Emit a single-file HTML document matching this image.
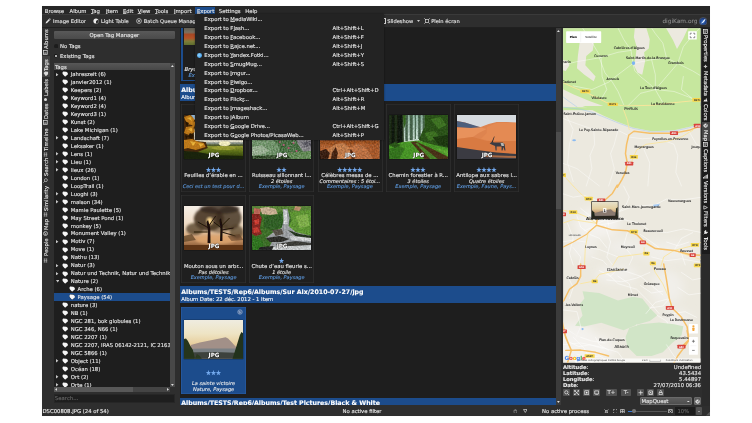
<!DOCTYPE html><html><head><meta charset="utf-8"><title>digiKam</title><style>
*{margin:0;padding:0;box-sizing:border-box}
html,body{width:752px;height:423px;overflow:hidden;background:#fff}
body{font-family:"DejaVu Sans","Liberation Sans",sans-serif;font-size:5.3px;color:#ececec;position:relative;line-height:1;-webkit-text-stroke:0.1px currentColor}
.a{position:absolute;white-space:nowrap}
.t{position:absolute;white-space:nowrap;line-height:8px;height:8px}
.c{text-align:center}
.r{text-align:right}
.b{font-weight:bold}
.i{font-style:italic}
.bl{color:#5e9be0}
.g{color:#8a8a8a}
u{text-decoration-thickness:0.45px;text-underline-offset:0.1px;text-decoration-color:#bbb}
.vl{position:absolute;white-space:nowrap;line-height:8px;height:8px;transform-origin:0 0;transform:rotate(-90deg)}
.vr{position:absolute;white-space:nowrap;line-height:8px;height:8px;transform-origin:0 0;transform:rotate(90deg)}
.cell{position:absolute;width:64.5px;height:87px;background:#212121}
.th{position:absolute;width:59.4px;height:44.5px;overflow:hidden;background:#555;box-shadow:0 0 1px #000}
.jpg{position:absolute;left:0;width:60px;text-align:center;font-weight:bold;color:#fff;font-size:5.6px;line-height:7px;text-shadow:0 0 1px #000,0 0 1px #000}
.st{position:absolute;color:#74aaee;font-size:6.6px;line-height:8px;height:8px;text-align:center;letter-spacing:-0.9px}
.tb{position:absolute;width:9px;height:7px;background:#5a5a5a;border-radius:1px;color:#eee;font-size:5px;line-height:7px;text-align:center;font-weight:bold}
</style></head><body><div id="root" style="position:absolute;left:0;top:0;width:752px;height:423px;overflow:hidden;will-change:transform">
<div class="a" style="left:42px;top:6.4px;width:668.3px;height:409.5px;background:#2e2e2e;box-shadow:0.2px 0.2px 1px rgba(0,0,0,0.7)"></div>
<div class="a" style="left:42px;top:6.4px;width:668.3px;height:7.9px;background:#272727"></div>
<div class="a" style="left:42px;top:14.2px;width:668px;height:0.6px;background:#3a3a3a"></div>
<div class="a" style="left:42px;top:27.2px;width:668px;height:0.8px;background:#202020"></div>
<div class="a" style="left:195.2px;top:6.9px;width:20.2px;height:7.2px;background:#1c4c8c"></div>
<div class="t" style="left:44.8px;top:6.5px"><u>B</u>rowse</div>
<div class="t" style="left:69.5px;top:6.5px"><u>A</u>lbum</div>
<div class="t" style="left:91px;top:6.5px"><u>T</u>ag</div>
<div class="t" style="left:105.9px;top:6.5px"><u>I</u>tem</div>
<div class="t" style="left:123px;top:6.5px"><u>E</u>dit</div>
<div class="t" style="left:137.7px;top:6.5px"><u>V</u>iew</div>
<div class="t" style="left:155.1px;top:6.5px"><u>T</u>ools</div>
<div class="t" style="left:173.9px;top:6.5px"><u>I</u>mport</div>
<div class="t" style="left:197px;top:6.5px"><u>E</u>xport</div>
<div class="t" style="left:218.9px;top:6.5px"><u>S</u>ettings</div>
<div class="t" style="left:245.3px;top:6.5px"><u>H</u>elp</div>
<svg class="a" style="left:44.5px;top:18px" width="6" height="6" viewBox="0 0 6 6"><path d="M0.6 5.4 L1 3.9 L3.9 1 L5 2.1 L2.1 5 Z" fill="#e8e8e8"/><path d="M4.2 0.7 L4.8 0.2 L5.8 1.2 L5.3 1.8 Z" fill="#e8e8e8"/></svg>
<div class="t " style="left:53px;top:16.9px;font-size:5.15px">Image Editor</div>
<svg class="a" style="left:93px;top:18px" width="6" height="6" viewBox="0 0 6 6"><circle cx="3" cy="3" r="2.6" fill="#eee"/><path d="M3 3 L5.2 1.6 A2.6 2.6 0 0 1 3 5.6 Z" fill="#2f2f2f"/></svg>
<div class="t " style="left:101px;top:16.9px;font-size:5.15px">Light Table</div>
<svg class="a" style="left:135.5px;top:18px" width="6" height="6" viewBox="0 0 6 6"><circle cx="3" cy="3" r="2.4" fill="none" stroke="#ddd" stroke-width="0.7"/><circle cx="3" cy="3" r="0.9" fill="#ddd"/></svg>
<div class="t " style="left:143.7px;top:16.9px;font-size:5.15px">Batch Queue Manager</div>
<div class="t " style="left:387.3px;top:16.9px;font-size:5.15px">Slideshow</div>
<div class="a" style="left:384px;top:18px;width:2.2px;height:6px;border:0.7px solid #ddd;border-left:none;border-radius:0 1px 1px 0"></div>
<svg class="a" style="left:417.00px;top:20.20px" width="3" height="2" viewBox="0 0 3 2"><polygon points="0,0 3,0 1.5,2" fill="#ccc"/></svg>
<svg class="a" style="left:423.5px;top:18px" width="6" height="6" viewBox="0 0 6 6"><rect x="1.4" y="1.4" width="3.2" height="3.2" fill="none" stroke="#ddd" stroke-width="0.7"/><path d="M0.3 0.3 L1.6 1.6 M5.7 0.3 L4.4 1.6 M0.3 5.7 L1.6 4.4 M5.7 5.7 L4.4 4.4" stroke="#ddd" stroke-width="0.7"/></svg>
<div class="t " style="left:431.2px;top:16.9px;font-size:5.15px">Plein écran</div>
<div class="t g" style="left:662.4px;top:17px;font-size:5.85px">digiKam.org</div>
<svg class="a" style="left:699px;top:16.6px" width="8.4" height="8.8" viewBox="0 0 8.4 8.8"><defs><radialGradient id="lg" cx="0.45" cy="0.55" r="0.6"><stop offset="0" stop-color="#3a78d0"/><stop offset="0.7" stop-color="#1c3c80"/><stop offset="1" stop-color="#222a40"/></radialGradient></defs><circle cx="4.2" cy="4.4" r="4" fill="url(#lg)" stroke="#6a6a6a" stroke-width="0.5"/><path d="M1.6 6.6 Q3.4 5.6 4.4 3.6 Q5.2 2.2 6.6 1.8 Q6 3.6 5 5 Q3.8 6.4 1.6 6.6Z" fill="#eef4ff"/></svg>
<div class="a" style="left:42px;top:28px;width:8px;height:378px;background:#2e2e2e"></div>
<div class="a" style="left:42.3px;top:56.1px;width:7.4px;height:21.2px;background:#424242"></div>
<div class="vl" style="left:42.3px;top:48.6px">Albums</div>
<svg class="a" style="left:43.4px;top:49.8px" width="4.6" height="4.8" viewBox="0 0 5 5"><rect x="0.4" y="0.4" width="4.2" height="4.2" fill="none" stroke="#dcdcdc" stroke-width="0.8"/><path d="M1.2 3.8 L2.2 2.2 L3 3.2 L3.8 2.6 L3.8 3.8Z" fill="#dcdcdc"/></svg>
<div class="vl" style="left:42.3px;top:70.5px">Tags</div>
<svg class="a" style="left:43.1px;top:70.7px" width="5.6" height="5.6" viewBox="0 0 6 6"><path d="M0.6 2.2 L2.2 0.6 L5.4 0.8 L5.4 3.4 L3 5.6 Z" fill="#dcdcdc"/></svg>
<div class="vl" style="left:42.3px;top:95.5px">Labels</div>
<div class="a" style="left:44.3px;top:97.9px;width:3.2px;height:3.2px;border-radius:50%;background:#dcdcdc"></div>
<div class="vl" style="left:42.3px;top:119.4px">Dates</div>
<svg class="a" style="left:43.4px;top:120.2px" width="4.6" height="4.8" viewBox="0 0 5 5"><rect x="0.4" y="0.4" width="4.2" height="4.2" fill="none" stroke="#dcdcdc" stroke-width="0.8"/><path d="M1.2 3.8 L2.2 2.2 L3 3.2 L3.8 2.6 L3.8 3.8Z" fill="#dcdcdc"/></svg>
<div class="vl" style="left:42.3px;top:150.6px">Timeline</div>
<svg class="a" style="left:43.4px;top:152.0px" width="5" height="5" viewBox="0 0 5 5"><path d="M0.6 1 H4.4 M0.6 2.5 H4.4 M0.6 4 H4.4 M1.5 0.5 V4.5 M3.5 0.5 V4.5" stroke="#dcdcdc" stroke-width="0.5" fill="none" opacity="0.8"/></svg>
<div class="vl" style="left:42.3px;top:176.2px">Search</div>
<svg class="a" style="left:43.4px;top:178.1px" width="5" height="5" viewBox="0 0 5 5"><circle cx="2.9" cy="2.1" r="1.5" fill="none" stroke="#dcdcdc" stroke-width="0.6"/><path d="M1.8 3.2 L0.4 4.6" stroke="#dcdcdc" stroke-width="0.7"/></svg>
<div class="vl" style="left:42.3px;top:210.5px">Similarity</div>
<svg class="a" style="left:43.4px;top:211.5px" width="5" height="5" viewBox="0 0 5 5"><path d="M0.6 1 H4.4 M0.6 2.5 H4.4 M0.6 4 H4.4 M1.5 0.5 V4.5 M3.5 0.5 V4.5" stroke="#dcdcdc" stroke-width="0.5" fill="none" opacity="0.8"/></svg>
<div class="vl" style="left:42.3px;top:229.5px">Map</div>
<svg class="a" style="left:43.4px;top:231.3px" width="5" height="5" viewBox="0 0 5 5"><circle cx="2.5" cy="2.5" r="2" fill="none" stroke="#dcdcdc" stroke-width="0.7"/><path d="M1 1.6 L2.6 2.2 L2 3.6 L3.4 3 " stroke="#dcdcdc" stroke-width="0.6" fill="none"/></svg>
<div class="vl" style="left:42.3px;top:256.2px">People</div>
<svg class="a" style="left:43.4px;top:258.1px" width="5" height="5" viewBox="0 0 5 5"><path d="M0.6 1 H4.4 M0.6 2.5 H4.4 M0.6 4 H4.4 M1.5 0.5 V4.5 M3.5 0.5 V4.5" stroke="#dcdcdc" stroke-width="0.5" fill="none" opacity="0.8"/></svg>
<div class="a" style="left:54px;top:31.2px;width:120.8px;height:8.2px;background:linear-gradient(#595959,#4a4a4a);border-radius:1px;box-shadow:0 0 0.6px #111"></div>
<div class="t c" style="left:54px;top:31.2px;width:120.5px">Open Tag Manager</div>
<svg class="a" style="left:53.70px;top:43.50px" width="4.4" height="4.4" viewBox="0 0 4.4 4.4"><circle cx="2.2" cy="2.2" r="2.2" fill="#1c1c1c"/></svg>
<div class="t" style="left:60px;top:42.2px">No Tags</div>
<svg class="a" style="left:54.20px;top:54.30px" width="3.4" height="3.4" viewBox="0 0 3.4 3.4"><circle cx="1.7" cy="1.7" r="1.7" fill="#161616"/></svg>
<svg class="a" style="left:54.90px;top:55.00px" width="2" height="2" viewBox="0 0 2 2"><circle cx="1" cy="1" r="1" fill="#e0e0e0"/></svg>
<div class="t" style="left:60px;top:52.4px">Existing Tags</div>
<div class="a" style="left:54px;top:63px;width:116.1px;height:324px;background:#1e1e1e"></div>
<div class="a" style="left:54px;top:63px;width:116.1px;height:6.7px;background:linear-gradient(#575757,#474747)"></div>
<div class="t" style="left:55px;top:62.5px">Tags</div>
<div class="a" style="left:170.1px;top:63px;width:4.5px;height:323.8px;background:#484848"></div>
<svg class="a" style="left:171.00px;top:64.60px" width="2.8" height="2" viewBox="0 0 2.8 2"><polygon points="0,2 2.8,2 1.4,0" fill="#ddd"/></svg>
<svg class="a" style="left:171.00px;top:383.60px" width="2.8" height="2" viewBox="0 0 2.8 2"><polygon points="0,0 2.8,0 1.4,2" fill="#ddd"/></svg>
<div class="a" style="left:54px;top:69.8px;width:116.1px;height:317.1px;overflow:hidden">
<svg class="a" style="left:2.40px;top:2.90px" width="2.4" height="3.4" viewBox="0 0 2.4 3.4"><polygon points="0,0 0,3.4 2.4,1.7" fill="#c8c8c8"/></svg>
<svg class="a" style="left:8.0px;top:1.6000000000000085px" width="6.4" height="6" viewBox="0 0 6.4 6"><path d="M0.5 1.2 L1.2 0.5 L4.4 0.7 L5.9 1.9 L5.7 3.2 L3.6 5.6 L2.6 5.3 L0.6 3 Z" fill="#f6f6f6" stroke="#0c0c0c" stroke-width="0.5" paint-order="stroke"/></svg>
<div class="t" style="left:16.8px;top:0.40000000000000835px">Jahreszeit (6)</div>
<svg class="a" style="left:8.0px;top:9.565000000000008px" width="6.4" height="6" viewBox="0 0 6.4 6"><path d="M0.5 1.2 L1.2 0.5 L4.4 0.7 L5.9 1.9 L5.7 3.2 L3.6 5.6 L2.6 5.3 L0.6 3 Z" fill="#f6f6f6" stroke="#0c0c0c" stroke-width="0.5" paint-order="stroke"/></svg>
<div class="t" style="left:16.8px;top:8.365000000000009px">janvier2012 (1)</div>
<svg class="a" style="left:8.0px;top:17.53000000000001px" width="6.4" height="6" viewBox="0 0 6.4 6"><path d="M0.5 1.2 L1.2 0.5 L4.4 0.7 L5.9 1.9 L5.7 3.2 L3.6 5.6 L2.6 5.3 L0.6 3 Z" fill="#f6f6f6" stroke="#0c0c0c" stroke-width="0.5" paint-order="stroke"/></svg>
<div class="t" style="left:16.8px;top:16.33000000000001px">Keepers (2)</div>
<svg class="a" style="left:8.0px;top:25.495000000000008px" width="6.4" height="6" viewBox="0 0 6.4 6"><path d="M0.5 1.2 L1.2 0.5 L4.4 0.7 L5.9 1.9 L5.7 3.2 L3.6 5.6 L2.6 5.3 L0.6 3 Z" fill="#f6f6f6" stroke="#0c0c0c" stroke-width="0.5" paint-order="stroke"/></svg>
<div class="t" style="left:16.8px;top:24.29500000000001px">Keyword1 (4)</div>
<svg class="a" style="left:8.0px;top:33.46000000000001px" width="6.4" height="6" viewBox="0 0 6.4 6"><path d="M0.5 1.2 L1.2 0.5 L4.4 0.7 L5.9 1.9 L5.7 3.2 L3.6 5.6 L2.6 5.3 L0.6 3 Z" fill="#f6f6f6" stroke="#0c0c0c" stroke-width="0.5" paint-order="stroke"/></svg>
<div class="t" style="left:16.8px;top:32.260000000000005px">Keyword2 (4)</div>
<svg class="a" style="left:8.0px;top:41.42500000000001px" width="6.4" height="6" viewBox="0 0 6.4 6"><path d="M0.5 1.2 L1.2 0.5 L4.4 0.7 L5.9 1.9 L5.7 3.2 L3.6 5.6 L2.6 5.3 L0.6 3 Z" fill="#f6f6f6" stroke="#0c0c0c" stroke-width="0.5" paint-order="stroke"/></svg>
<div class="t" style="left:16.8px;top:40.22500000000001px">Keyword3 (1)</div>
<svg class="a" style="left:8.0px;top:49.39000000000001px" width="6.4" height="6" viewBox="0 0 6.4 6"><path d="M0.5 1.2 L1.2 0.5 L4.4 0.7 L5.9 1.9 L5.7 3.2 L3.6 5.6 L2.6 5.3 L0.6 3 Z" fill="#f6f6f6" stroke="#0c0c0c" stroke-width="0.5" paint-order="stroke"/></svg>
<div class="t" style="left:16.8px;top:48.190000000000005px">Kunst (2)</div>
<svg class="a" style="left:8.0px;top:57.355000000000004px" width="6.4" height="6" viewBox="0 0 6.4 6"><path d="M0.5 1.2 L1.2 0.5 L4.4 0.7 L5.9 1.9 L5.7 3.2 L3.6 5.6 L2.6 5.3 L0.6 3 Z" fill="#f6f6f6" stroke="#0c0c0c" stroke-width="0.5" paint-order="stroke"/></svg>
<div class="t" style="left:16.8px;top:56.155px">Lake Michigan (1)</div>
<svg class="a" style="left:2.40px;top:66.62px" width="2.4" height="3.4" viewBox="0 0 2.4 3.4"><polygon points="0,0 0,3.4 2.4,1.7" fill="#c8c8c8"/></svg>
<svg class="a" style="left:8.0px;top:65.32000000000001px" width="6.4" height="6" viewBox="0 0 6.4 6"><path d="M0.5 1.2 L1.2 0.5 L4.4 0.7 L5.9 1.9 L5.7 3.2 L3.6 5.6 L2.6 5.3 L0.6 3 Z" fill="#f6f6f6" stroke="#0c0c0c" stroke-width="0.5" paint-order="stroke"/></svg>
<div class="t" style="left:16.8px;top:64.12px">Landschaft (7)</div>
<svg class="a" style="left:8.0px;top:73.28500000000001px" width="6.4" height="6" viewBox="0 0 6.4 6"><path d="M0.5 1.2 L1.2 0.5 L4.4 0.7 L5.9 1.9 L5.7 3.2 L3.6 5.6 L2.6 5.3 L0.6 3 Z" fill="#f6f6f6" stroke="#0c0c0c" stroke-width="0.5" paint-order="stroke"/></svg>
<div class="t" style="left:16.8px;top:72.08500000000001px">Leksaker (1)</div>
<svg class="a" style="left:2.40px;top:82.55px" width="2.4" height="3.4" viewBox="0 0 2.4 3.4"><polygon points="0,0 0,3.4 2.4,1.7" fill="#c8c8c8"/></svg>
<svg class="a" style="left:8.0px;top:81.25000000000001px" width="6.4" height="6" viewBox="0 0 6.4 6"><path d="M0.5 1.2 L1.2 0.5 L4.4 0.7 L5.9 1.9 L5.7 3.2 L3.6 5.6 L2.6 5.3 L0.6 3 Z" fill="#f6f6f6" stroke="#0c0c0c" stroke-width="0.5" paint-order="stroke"/></svg>
<div class="t" style="left:16.8px;top:80.05000000000001px">Lens (1)</div>
<svg class="a" style="left:2.40px;top:90.52px" width="2.4" height="3.4" viewBox="0 0 2.4 3.4"><polygon points="0,0 0,3.4 2.4,1.7" fill="#c8c8c8"/></svg>
<svg class="a" style="left:8.0px;top:89.215px" width="6.4" height="6" viewBox="0 0 6.4 6"><path d="M0.5 1.2 L1.2 0.5 L4.4 0.7 L5.9 1.9 L5.7 3.2 L3.6 5.6 L2.6 5.3 L0.6 3 Z" fill="#f6f6f6" stroke="#0c0c0c" stroke-width="0.5" paint-order="stroke"/></svg>
<div class="t" style="left:16.8px;top:88.015px">Lieu (1)</div>
<svg class="a" style="left:2.40px;top:98.48px" width="2.4" height="3.4" viewBox="0 0 2.4 3.4"><polygon points="0,0 0,3.4 2.4,1.7" fill="#c8c8c8"/></svg>
<svg class="a" style="left:8.0px;top:97.18px" width="6.4" height="6" viewBox="0 0 6.4 6"><path d="M0.5 1.2 L1.2 0.5 L4.4 0.7 L5.9 1.9 L5.7 3.2 L3.6 5.6 L2.6 5.3 L0.6 3 Z" fill="#f6f6f6" stroke="#0c0c0c" stroke-width="0.5" paint-order="stroke"/></svg>
<div class="t" style="left:16.8px;top:95.98px">lieux (26)</div>
<svg class="a" style="left:8.0px;top:105.14500000000001px" width="6.4" height="6" viewBox="0 0 6.4 6"><path d="M0.5 1.2 L1.2 0.5 L4.4 0.7 L5.9 1.9 L5.7 3.2 L3.6 5.6 L2.6 5.3 L0.6 3 Z" fill="#f6f6f6" stroke="#0c0c0c" stroke-width="0.5" paint-order="stroke"/></svg>
<div class="t" style="left:16.8px;top:103.94500000000001px">London (1)</div>
<svg class="a" style="left:8.0px;top:113.11px" width="6.4" height="6" viewBox="0 0 6.4 6"><path d="M0.5 1.2 L1.2 0.5 L4.4 0.7 L5.9 1.9 L5.7 3.2 L3.6 5.6 L2.6 5.3 L0.6 3 Z" fill="#f6f6f6" stroke="#0c0c0c" stroke-width="0.5" paint-order="stroke"/></svg>
<div class="t" style="left:16.8px;top:111.91px">LoopTrail (1)</div>
<svg class="a" style="left:2.40px;top:122.38px" width="2.4" height="3.4" viewBox="0 0 2.4 3.4"><polygon points="0,0 0,3.4 2.4,1.7" fill="#c8c8c8"/></svg>
<svg class="a" style="left:8.0px;top:121.075px" width="6.4" height="6" viewBox="0 0 6.4 6"><path d="M0.5 1.2 L1.2 0.5 L4.4 0.7 L5.9 1.9 L5.7 3.2 L3.6 5.6 L2.6 5.3 L0.6 3 Z" fill="#f6f6f6" stroke="#0c0c0c" stroke-width="0.5" paint-order="stroke"/></svg>
<div class="t" style="left:16.8px;top:119.875px">Luoghi (3)</div>
<svg class="a" style="left:2.40px;top:130.34px" width="2.4" height="3.4" viewBox="0 0 2.4 3.4"><polygon points="0,0 0,3.4 2.4,1.7" fill="#c8c8c8"/></svg>
<svg class="a" style="left:8.0px;top:129.04000000000002px" width="6.4" height="6" viewBox="0 0 6.4 6"><path d="M0.5 1.2 L1.2 0.5 L4.4 0.7 L5.9 1.9 L5.7 3.2 L3.6 5.6 L2.6 5.3 L0.6 3 Z" fill="#f6f6f6" stroke="#0c0c0c" stroke-width="0.5" paint-order="stroke"/></svg>
<div class="t" style="left:16.8px;top:127.84000000000002px">maison (34)</div>
<svg class="a" style="left:8.0px;top:137.005px" width="6.4" height="6" viewBox="0 0 6.4 6"><path d="M0.5 1.2 L1.2 0.5 L4.4 0.7 L5.9 1.9 L5.7 3.2 L3.6 5.6 L2.6 5.3 L0.6 3 Z" fill="#f6f6f6" stroke="#0c0c0c" stroke-width="0.5" paint-order="stroke"/></svg>
<div class="t" style="left:16.8px;top:135.805px">Mamie Paulette (5)</div>
<svg class="a" style="left:8.0px;top:144.97000000000003px" width="6.4" height="6" viewBox="0 0 6.4 6"><path d="M0.5 1.2 L1.2 0.5 L4.4 0.7 L5.9 1.9 L5.7 3.2 L3.6 5.6 L2.6 5.3 L0.6 3 Z" fill="#f6f6f6" stroke="#0c0c0c" stroke-width="0.5" paint-order="stroke"/></svg>
<div class="t" style="left:16.8px;top:143.77000000000004px">May Street Pond (1)</div>
<svg class="a" style="left:8.0px;top:152.935px" width="6.4" height="6" viewBox="0 0 6.4 6"><path d="M0.5 1.2 L1.2 0.5 L4.4 0.7 L5.9 1.9 L5.7 3.2 L3.6 5.6 L2.6 5.3 L0.6 3 Z" fill="#f6f6f6" stroke="#0c0c0c" stroke-width="0.5" paint-order="stroke"/></svg>
<div class="t" style="left:16.8px;top:151.735px">monkey (5)</div>
<svg class="a" style="left:8.0px;top:160.90000000000003px" width="6.4" height="6" viewBox="0 0 6.4 6"><path d="M0.5 1.2 L1.2 0.5 L4.4 0.7 L5.9 1.9 L5.7 3.2 L3.6 5.6 L2.6 5.3 L0.6 3 Z" fill="#f6f6f6" stroke="#0c0c0c" stroke-width="0.5" paint-order="stroke"/></svg>
<div class="t" style="left:16.8px;top:159.70000000000005px">Monument Valley (1)</div>
<svg class="a" style="left:2.40px;top:170.17px" width="2.4" height="3.4" viewBox="0 0 2.4 3.4"><polygon points="0,0 0,3.4 2.4,1.7" fill="#c8c8c8"/></svg>
<svg class="a" style="left:8.0px;top:168.865px" width="6.4" height="6" viewBox="0 0 6.4 6"><path d="M0.5 1.2 L1.2 0.5 L4.4 0.7 L5.9 1.9 L5.7 3.2 L3.6 5.6 L2.6 5.3 L0.6 3 Z" fill="#f6f6f6" stroke="#0c0c0c" stroke-width="0.5" paint-order="stroke"/></svg>
<div class="t" style="left:16.8px;top:167.66500000000002px">Motiv (7)</div>
<svg class="a" style="left:8.0px;top:176.82999999999998px" width="6.4" height="6" viewBox="0 0 6.4 6"><path d="M0.5 1.2 L1.2 0.5 L4.4 0.7 L5.9 1.9 L5.7 3.2 L3.6 5.6 L2.6 5.3 L0.6 3 Z" fill="#f6f6f6" stroke="#0c0c0c" stroke-width="0.5" paint-order="stroke"/></svg>
<div class="t" style="left:16.8px;top:175.63px">Move (1)</div>
<svg class="a" style="left:8.0px;top:184.79500000000002px" width="6.4" height="6" viewBox="0 0 6.4 6"><path d="M0.5 1.2 L1.2 0.5 L4.4 0.7 L5.9 1.9 L5.7 3.2 L3.6 5.6 L2.6 5.3 L0.6 3 Z" fill="#f6f6f6" stroke="#0c0c0c" stroke-width="0.5" paint-order="stroke"/></svg>
<div class="t" style="left:16.8px;top:183.59500000000003px">Nathu (13)</div>
<svg class="a" style="left:2.40px;top:194.06px" width="2.4" height="3.4" viewBox="0 0 2.4 3.4"><polygon points="0,0 0,3.4 2.4,1.7" fill="#c8c8c8"/></svg>
<svg class="a" style="left:8.0px;top:192.76px" width="6.4" height="6" viewBox="0 0 6.4 6"><path d="M0.5 1.2 L1.2 0.5 L4.4 0.7 L5.9 1.9 L5.7 3.2 L3.6 5.6 L2.6 5.3 L0.6 3 Z" fill="#f6f6f6" stroke="#0c0c0c" stroke-width="0.5" paint-order="stroke"/></svg>
<div class="t" style="left:16.8px;top:191.56px">Natur (3)</div>
<svg class="a" style="left:2.40px;top:202.03px" width="2.4" height="3.4" viewBox="0 0 2.4 3.4"><polygon points="0,0 0,3.4 2.4,1.7" fill="#c8c8c8"/></svg>
<svg class="a" style="left:8.0px;top:200.72500000000002px" width="6.4" height="6" viewBox="0 0 6.4 6"><path d="M0.5 1.2 L1.2 0.5 L4.4 0.7 L5.9 1.9 L5.7 3.2 L3.6 5.6 L2.6 5.3 L0.6 3 Z" fill="#f6f6f6" stroke="#0c0c0c" stroke-width="0.5" paint-order="stroke"/></svg>
<div class="t" style="left:16.8px;top:199.52500000000003px">Natur und Technik, Natur und Technik</div>
<svg class="a" style="left:1.90px;top:210.49px" width="3.4" height="2.4" viewBox="0 0 3.4 2.4"><polygon points="0,0 3.4,0 1.7,2.4" fill="#c8c8c8"/></svg>
<svg class="a" style="left:8.0px;top:208.69px" width="6.4" height="6" viewBox="0 0 6.4 6"><path d="M0.5 1.2 L1.2 0.5 L4.4 0.7 L5.9 1.9 L5.7 3.2 L3.6 5.6 L2.6 5.3 L0.6 3 Z" fill="#f6f6f6" stroke="#0c0c0c" stroke-width="0.5" paint-order="stroke"/></svg>
<div class="t" style="left:16.8px;top:207.49px">Nature (2)</div>
<svg class="a" style="left:14.8px;top:216.65500000000003px" width="6.4" height="6" viewBox="0 0 6.4 6"><path d="M0.5 1.2 L1.2 0.5 L4.4 0.7 L5.9 1.9 L5.7 3.2 L3.6 5.6 L2.6 5.3 L0.6 3 Z" fill="#f6f6f6" stroke="#0c0c0c" stroke-width="0.5" paint-order="stroke"/></svg>
<div class="t" style="left:23.6px;top:215.45500000000004px">Arche (6)</div>
<div class="a" style="left:0;top:223.62px;width:116.5px;height:8px;background:#1c4c8c"></div>
<svg class="a" style="left:14.8px;top:224.62px" width="6.4" height="6" viewBox="0 0 6.4 6"><path d="M0.5 1.2 L1.2 0.5 L4.4 0.7 L5.9 1.9 L5.7 3.2 L3.6 5.6 L2.6 5.3 L0.6 3 Z" fill="#f6f6f6" stroke="#0c0c0c" stroke-width="0.5" paint-order="stroke"/></svg>
<div class="t" style="left:23.6px;top:223.42000000000002px">Paysage (54)</div>
<svg class="a" style="left:8.0px;top:232.58499999999998px" width="6.4" height="6" viewBox="0 0 6.4 6"><path d="M0.5 1.2 L1.2 0.5 L4.4 0.7 L5.9 1.9 L5.7 3.2 L3.6 5.6 L2.6 5.3 L0.6 3 Z" fill="#f6f6f6" stroke="#0c0c0c" stroke-width="0.5" paint-order="stroke"/></svg>
<div class="t" style="left:16.8px;top:231.385px">nature (3)</div>
<svg class="a" style="left:8.0px;top:240.55px" width="6.4" height="6" viewBox="0 0 6.4 6"><path d="M0.5 1.2 L1.2 0.5 L4.4 0.7 L5.9 1.9 L5.7 3.2 L3.6 5.6 L2.6 5.3 L0.6 3 Z" fill="#f6f6f6" stroke="#0c0c0c" stroke-width="0.5" paint-order="stroke"/></svg>
<div class="t" style="left:16.8px;top:239.35000000000002px">NB (1)</div>
<svg class="a" style="left:8.0px;top:248.515px" width="6.4" height="6" viewBox="0 0 6.4 6"><path d="M0.5 1.2 L1.2 0.5 L4.4 0.7 L5.9 1.9 L5.7 3.2 L3.6 5.6 L2.6 5.3 L0.6 3 Z" fill="#f6f6f6" stroke="#0c0c0c" stroke-width="0.5" paint-order="stroke"/></svg>
<div class="t" style="left:16.8px;top:247.315px">NGC 281, bok globules (1)</div>
<svg class="a" style="left:8.0px;top:256.48px" width="6.4" height="6" viewBox="0 0 6.4 6"><path d="M0.5 1.2 L1.2 0.5 L4.4 0.7 L5.9 1.9 L5.7 3.2 L3.6 5.6 L2.6 5.3 L0.6 3 Z" fill="#f6f6f6" stroke="#0c0c0c" stroke-width="0.5" paint-order="stroke"/></svg>
<div class="t" style="left:16.8px;top:255.28000000000003px">NGC 346, N66 (1)</div>
<svg class="a" style="left:8.0px;top:264.445px" width="6.4" height="6" viewBox="0 0 6.4 6"><path d="M0.5 1.2 L1.2 0.5 L4.4 0.7 L5.9 1.9 L5.7 3.2 L3.6 5.6 L2.6 5.3 L0.6 3 Z" fill="#f6f6f6" stroke="#0c0c0c" stroke-width="0.5" paint-order="stroke"/></svg>
<div class="t" style="left:16.8px;top:263.245px">NGC 2207 (1)</div>
<svg class="a" style="left:8.0px;top:272.41px" width="6.4" height="6" viewBox="0 0 6.4 6"><path d="M0.5 1.2 L1.2 0.5 L4.4 0.7 L5.9 1.9 L5.7 3.2 L3.6 5.6 L2.6 5.3 L0.6 3 Z" fill="#f6f6f6" stroke="#0c0c0c" stroke-width="0.5" paint-order="stroke"/></svg>
<div class="t" style="left:16.8px;top:271.21000000000004px">NGC 2207, IRAS 06142-2121, IC 2163</div>
<svg class="a" style="left:8.0px;top:280.375px" width="6.4" height="6" viewBox="0 0 6.4 6"><path d="M0.5 1.2 L1.2 0.5 L4.4 0.7 L5.9 1.9 L5.7 3.2 L3.6 5.6 L2.6 5.3 L0.6 3 Z" fill="#f6f6f6" stroke="#0c0c0c" stroke-width="0.5" paint-order="stroke"/></svg>
<div class="t" style="left:16.8px;top:279.175px">NGC 5866 (1)</div>
<svg class="a" style="left:2.40px;top:289.64px" width="2.4" height="3.4" viewBox="0 0 2.4 3.4"><polygon points="0,0 0,3.4 2.4,1.7" fill="#c8c8c8"/></svg>
<svg class="a" style="left:8.0px;top:288.34000000000003px" width="6.4" height="6" viewBox="0 0 6.4 6"><path d="M0.5 1.2 L1.2 0.5 L4.4 0.7 L5.9 1.9 L5.7 3.2 L3.6 5.6 L2.6 5.3 L0.6 3 Z" fill="#f6f6f6" stroke="#0c0c0c" stroke-width="0.5" paint-order="stroke"/></svg>
<div class="t" style="left:16.8px;top:287.14000000000004px">Object (11)</div>
<svg class="a" style="left:8.0px;top:296.305px" width="6.4" height="6" viewBox="0 0 6.4 6"><path d="M0.5 1.2 L1.2 0.5 L4.4 0.7 L5.9 1.9 L5.7 3.2 L3.6 5.6 L2.6 5.3 L0.6 3 Z" fill="#f6f6f6" stroke="#0c0c0c" stroke-width="0.5" paint-order="stroke"/></svg>
<div class="t" style="left:16.8px;top:295.105px">Océan (18)</div>
<svg class="a" style="left:2.40px;top:305.57px" width="2.4" height="3.4" viewBox="0 0 2.4 3.4"><polygon points="0,0 0,3.4 2.4,1.7" fill="#c8c8c8"/></svg>
<svg class="a" style="left:8.0px;top:304.27000000000004px" width="6.4" height="6" viewBox="0 0 6.4 6"><path d="M0.5 1.2 L1.2 0.5 L4.4 0.7 L5.9 1.9 L5.7 3.2 L3.6 5.6 L2.6 5.3 L0.6 3 Z" fill="#f6f6f6" stroke="#0c0c0c" stroke-width="0.5" paint-order="stroke"/></svg>
<div class="t" style="left:16.8px;top:303.07000000000005px">Ort (2)</div>
<svg class="a" style="left:2.40px;top:313.54px" width="2.4" height="3.4" viewBox="0 0 2.4 3.4"><polygon points="0,0 0,3.4 2.4,1.7" fill="#c8c8c8"/></svg>
<svg class="a" style="left:8.0px;top:312.235px" width="6.4" height="6" viewBox="0 0 6.4 6"><path d="M0.5 1.2 L1.2 0.5 L4.4 0.7 L5.9 1.9 L5.7 3.2 L3.6 5.6 L2.6 5.3 L0.6 3 Z" fill="#f6f6f6" stroke="#0c0c0c" stroke-width="0.5" paint-order="stroke"/></svg>
<div class="t" style="left:16.8px;top:311.035px">Orte (1)</div>
</div>
<div class="a" style="left:54px;top:386.9px;width:116.1px;height:4.8px;background:#444"></div>
<div class="a" style="left:54px;top:386.9px;width:79.3px;height:4.8px;background:#585858"></div>
<svg class="a" style="left:54.80px;top:387.90px" width="2" height="2.8" viewBox="0 0 2 2.8"><polygon points="2,0 2,2.8 0,1.4" fill="#ddd"/></svg>
<svg class="a" style="left:166.60px;top:387.90px" width="2" height="2.8" viewBox="0 0 2 2.8"><polygon points="0,0 0,2.8 2,1.4" fill="#ddd"/></svg>
<div class="a" style="left:54px;top:393.9px;width:121px;height:8.7px;background:#1e1e1e;border:0.5px solid #262626"></div>
<div class="t" style="left:55px;top:394.2px;color:#686868">Search...</div>
<div class="a" style="left:179.5px;top:28px;width:376.8px;height:377.2px;background:#1e1e1e"></div>
<div class="a" style="left:556.3px;top:28px;width:4.3px;height:377.2px;background:#3b3b3b"></div>
<div class="a" style="left:556.3px;top:132px;width:4.3px;height:77px;background:#4d4d4d"></div>
<svg class="a" style="left:557.10px;top:29.50px" width="2.8" height="2" viewBox="0 0 2.8 2"><polygon points="0,2 2.8,2 1.4,0" fill="#ddd"/></svg>
<svg class="a" style="left:557.10px;top:401.00px" width="2.8" height="2" viewBox="0 0 2.8 2"><polygon points="0,0 2.8,0 1.4,2" fill="#ddd"/></svg>
<div class="a" style="left:181px;top:28px;width:2px;height:53px;background:#1c4c8c"></div>
<div class="a" style="left:181px;top:79.6px;width:65px;height:1.4px;background:#1c4c8c"></div>
<div class="a" style="left:184px;top:28px;width:40px;height:17.3px;background:linear-gradient(180deg,#625e54 0,#7a7060 25%,#a84824 38%,#b45228 60%,#7e7e3a 78%,#5e6e2e 100%)"></div>
<div class="t i" style="left:184.5px;top:64.8px;font-size:5.3px">Bryce Canyon</div>
<div class="t i bl" style="left:188.5px;top:70.5px;font-size:5.3px">Exemple, Paysage</div>
<div class="a" style="left:179.5px;top:84.2px;width:376.5px;height:16.8px;background:#1c4c8c;overflow:hidden"><div class="t b" style="left:1.7px;top:1.6px;font-size:6.28px;color:#fff">Albums/TESTS/Rep6/Albums/Exemples</div><div class="t" style="left:1.7px;top:9.3px;font-size:5.3px;color:#fff">Album Date: 22 déc. 2012 - 8 Items</div></div>
<div class="a" style="left:179.5px;top:286px;width:376.5px;height:17.3px;background:#1c4c8c;overflow:hidden"><div class="t b" style="left:1.7px;top:1.6px;font-size:6.28px;color:#fff">Albums/TESTS/Rep6/Albums/Sur Aix/2010-07-27/jpg</div><div class="t" style="left:1.7px;top:9.3px;font-size:5.3px;color:#fff">Album Date: 22 déc. 2012 - 1 Item</div></div>
<div class="a" style="left:179.5px;top:397.9px;width:376.5px;height:7.4px;background:#1c4c8c;overflow:hidden"><div class="t b" style="left:1.7px;top:1.6px;font-size:6.28px;color:#fff">Albums/TESTS/Rep6/Albums/Test Pictures/Black &amp; White</div></div>
<div class="cell" style="left:181.3px;top:104px;height:88px;width:65px;background:#1f1f1f;box-shadow:inset 0 0 0 0.6px #343434">
<div class="th" style="left:2.7px;top:10.50px;height:44.5px"><svg width="59.4" height="44.5" viewBox="0 0 60 44.5" preserveAspectRatio="none" style="position:absolute;left:0;top:0"><defs><filter id="bl" x="-5%" y="-5%" width="110%" height="110%"><feGaussianBlur stdDeviation="0.7"/></filter><filter id="b2" x="-5%" y="-5%" width="110%" height="110%"><feGaussianBlur stdDeviation="1.3"/></filter><filter id="nz" x="0" y="0" width="100%" height="100%"><feTurbulence type="fractalNoise" baseFrequency="0.55" numOctaves="2" seed="7"/><feColorMatrix type="matrix" values="0 0 0 0 0  0 0 0 0 0  0 0 0 0 0  1.6 1.6 0 0 -1.1"/></filter><filter id="nw" x="0" y="0" width="100%" height="100%"><feTurbulence type="fractalNoise" baseFrequency="0.6" numOctaves="2" seed="3"/><feColorMatrix type="matrix" values="0 0 0 0 1  0 0 0 0 1  0 0 0 0 1  1.6 0 1.6 0 -1.25"/></filter></defs><defs><linearGradient id="i1f" x1="0" y1="0" x2="0" y2="1"><stop offset="0" stop-color="#98a034"/><stop offset="0.45" stop-color="#5c7018"/><stop offset="1" stop-color="#222e08"/></linearGradient></defs><rect width="60" height="44.5" fill="#3a2408"/><g filter="url(#bl)"><rect x="10" y="0" width="50" height="29" fill="#f6f2dc"/><rect x="10" y="27.3" width="50" height="3" fill="#8a9488"/><rect x="10" y="29.4" width="50" height="2.6" fill="#56622e"/><rect x="0" y="31" width="60" height="13.5" fill="url(#i1f)"/><ellipse cx="41" cy="28.6" rx="6" ry="2.6" fill="#fbf6c8"/><ellipse cx="40" cy="33" rx="12" ry="2" fill="#b0b040" opacity="0.6"/><path d="M0 0 H13 L12 10 L9 20 L11 26 L22 27 L24 33 L14 37 L0 38Z" fill="#4a2c0a"/><path d="M0 2 L6 0 L11 4 L8 10 L3 9Z M2 12 L9 11 L11 17 L5 20 L0 18Z M0 25 L8 24 L14 26.5 L20 28 L22 32 L12 35 L4 33 L0 34Z M5 5 L12 7 L10 13Z" fill="#c8801a"/><path d="M3 3 L7 2 L8 6Z M4 14 L8 13 L8 17Z M6 26 L12 27.5 L9 31Z M14 28 L20 29 L17 32Z" fill="#f0b83c"/><path d="M7 0 H12 L11 5Z" fill="#9cc0e0"/><path d="M1 6 L5 8 L3 12Z M6 18 L10 20 L8 24 L4 22Z M1 20 L4 21 L2 25Z" fill="#2a1806"/><path d="M0 36 L14 37 L30 40 L60 41 V44.5 H0Z" fill="#1e2808"/></g><rect width="60" height="44.5" filter="url(#nz)" opacity="0.12"/></svg><div class="jpg" style="top:37.6px">JPG</div></div>
<div class="st" style="left:-0.4px;top:61.8px;width:64px">★★★</div>
<div class="t c " style="left:0.5px;top:66.9px;width:63.5px;font-size:5.3px">Feuilles d’érable en ...</div>
<div class="t c " style="left:0.5px;top:72.55000000000001px;width:63.5px;font-size:5.3px">&nbsp;</div>
<div class="t c i bl" style="left:0.5px;top:78.20000000000002px;width:63.5px;font-size:5.0px">Ceci est un test pour d...</div>
</div>
<div class="cell" style="left:249.4px;top:104px;height:88px;width:65px;background:#1f1f1f;box-shadow:inset 0 0 0 0.6px #343434">
<div class="th" style="left:2.7px;top:10.50px;height:44.5px"><svg width="59.4" height="44.5" viewBox="0 0 60 44.5" preserveAspectRatio="none" style="position:absolute;left:0;top:0"><defs><filter id="bl" x="-5%" y="-5%" width="110%" height="110%"><feGaussianBlur stdDeviation="0.7"/></filter><filter id="b2" x="-5%" y="-5%" width="110%" height="110%"><feGaussianBlur stdDeviation="1.3"/></filter><filter id="nz" x="0" y="0" width="100%" height="100%"><feTurbulence type="fractalNoise" baseFrequency="0.55" numOctaves="2" seed="7"/><feColorMatrix type="matrix" values="0 0 0 0 0  0 0 0 0 0  0 0 0 0 0  1.6 1.6 0 0 -1.1"/></filter><filter id="nw" x="0" y="0" width="100%" height="100%"><feTurbulence type="fractalNoise" baseFrequency="0.6" numOctaves="2" seed="3"/><feColorMatrix type="matrix" values="0 0 0 0 1  0 0 0 0 1  0 0 0 0 1  1.6 0 1.6 0 -1.25"/></filter></defs><rect width="60" height="44.5" fill="#3e6e38"/><g filter="url(#bl)"><path d="M0 24 L20 24 L30 30 L26 40 L0 43Z" fill="#6a9464"/><path d="M20 24 H46 L50 34 L30 38 L26 30Z" fill="#3a6a34"/><path d="M44 24 H60 V36 L52 37 L47 30Z" fill="#848288"/><path d="M50 27 L60 26 V31 L53 32Z" fill="#5a5862"/><circle cx="32" cy="30" r="1.1" fill="#c04a74"/><circle cx="37" cy="33" r="1.1" fill="#c04a74"/><circle cx="42" cy="28" r="1" fill="#c04a74"/><circle cx="45" cy="36" r="1.1" fill="#c04a74"/><circle cx="28" cy="27" r="1" fill="#a84064"/><circle cx="40" cy="38" r="1" fill="#a84064"/><path d="M0 32 L10 30 L18 36 L8 40 L0 40Z" fill="#9cb894"/><path d="M0 41 L30 40 L60 38 V44.5 H0Z" fill="#26421e"/><path d="M34 38 L60 36 V44.5 H40Z" fill="#5a8a4c"/></g><rect width="60" height="44.5" filter="url(#nz)" opacity="0.2"/><rect width="60" height="44.5" filter="url(#nw)" opacity="0.3"/></svg><div class="jpg" style="top:37.6px">JPG</div></div>
<div class="st" style="left:-0.4px;top:61.8px;width:64px">★★</div>
<div class="t c " style="left:0.5px;top:66.9px;width:63.5px;font-size:5.3px">Ruisseau sillonnant l...</div>
<div class="t c i" style="left:0.5px;top:72.55000000000001px;width:63.5px;font-size:5.0px">2 étoiles</div>
<div class="t c i bl" style="left:0.5px;top:78.20000000000002px;width:63.5px;font-size:5.0px">Exemple, Paysage</div>
</div>
<div class="cell" style="left:317.6px;top:104px;height:88px;width:65px;background:#1f1f1f;box-shadow:inset 0 0 0 0.6px #343434">
<div class="th" style="left:2.7px;top:10.50px;height:44.5px"><svg width="59.4" height="44.5" viewBox="0 0 60 44.5" preserveAspectRatio="none" style="position:absolute;left:0;top:0"><defs><filter id="bl" x="-5%" y="-5%" width="110%" height="110%"><feGaussianBlur stdDeviation="0.7"/></filter><filter id="b2" x="-5%" y="-5%" width="110%" height="110%"><feGaussianBlur stdDeviation="1.3"/></filter><filter id="nz" x="0" y="0" width="100%" height="100%"><feTurbulence type="fractalNoise" baseFrequency="0.55" numOctaves="2" seed="7"/><feColorMatrix type="matrix" values="0 0 0 0 0  0 0 0 0 0  0 0 0 0 0  1.6 1.6 0 0 -1.1"/></filter><filter id="nw" x="0" y="0" width="100%" height="100%"><feTurbulence type="fractalNoise" baseFrequency="0.6" numOctaves="2" seed="3"/><feColorMatrix type="matrix" values="0 0 0 0 1  0 0 0 0 1  0 0 0 0 1  1.6 0 1.6 0 -1.25"/></filter></defs><rect width="60" height="44.5" fill="#c46a32"/><g filter="url(#bl)"><path d="M0 24 H60 V30 L40 28 L20 31 L0 29Z" fill="#a8521e"/><path d="M8 34 L16 29 L24 28 L30 33 L34 44.5 H4Z" fill="#d88850"/><path d="M30 32 L38 29 L46 32 L52 40 L54 44.5 H34Z" fill="#d07a44"/><path d="M46 30 L60 28 V44.5 H54Z" fill="#b85e2a"/><path d="M0 36 L6 34 L10 38 L8 44.5 H0Z" fill="#3a1a0a"/><path d="M12 38 L16 32 L18 38 L17 44.5 H11Z" fill="#4a200c"/><path d="M30 34 L33 36 L35 44.5 H32Z" fill="#6a2e10"/><path d="M0 24 H60 V26 H0Z" fill="#8a4a28"/></g><rect width="60" height="44.5" filter="url(#nz)" opacity="0.25"/><rect width="60" height="44.5" filter="url(#nw)" opacity="0.1"/></svg><div class="jpg" style="top:37.6px">JPG</div></div>
<div class="st" style="left:-0.4px;top:61.8px;width:64px">★★★★★</div>
<div class="t c " style="left:0.5px;top:66.9px;width:63.5px;font-size:5.3px">Célèbres mesas de ...</div>
<div class="t c i" style="left:0.5px;top:72.55000000000001px;width:63.5px;font-size:5.0px">Commentaires : 5 étoi...</div>
<div class="t c i bl" style="left:0.5px;top:78.20000000000002px;width:63.5px;font-size:5.0px">Exemple, Paysage</div>
</div>
<div class="cell" style="left:386px;top:104px;height:88px;width:65px;background:#1f1f1f;box-shadow:inset 0 0 0 0.6px #343434">
<div class="th" style="left:2.7px;top:10.50px;height:44.5px"><svg width="59.4" height="44.5" viewBox="0 0 60 44.5" preserveAspectRatio="none" style="position:absolute;left:0;top:0"><defs><filter id="bl" x="-5%" y="-5%" width="110%" height="110%"><feGaussianBlur stdDeviation="0.7"/></filter><filter id="b2" x="-5%" y="-5%" width="110%" height="110%"><feGaussianBlur stdDeviation="1.3"/></filter><filter id="nz" x="0" y="0" width="100%" height="100%"><feTurbulence type="fractalNoise" baseFrequency="0.55" numOctaves="2" seed="7"/><feColorMatrix type="matrix" values="0 0 0 0 0  0 0 0 0 0  0 0 0 0 0  1.6 1.6 0 0 -1.1"/></filter><filter id="nw" x="0" y="0" width="100%" height="100%"><feTurbulence type="fractalNoise" baseFrequency="0.6" numOctaves="2" seed="3"/><feColorMatrix type="matrix" values="0 0 0 0 1  0 0 0 0 1  0 0 0 0 1  1.6 0 1.6 0 -1.25"/></filter></defs><defs><linearGradient id="i4m" x1="0" y1="0" x2="0" y2="1"><stop offset="0" stop-color="#9cc4b0"/><stop offset="1" stop-color="#d8ece0"/></linearGradient></defs><rect width="60" height="44.5" fill="#2f5e1c"/><g filter="url(#bl)"><rect x="14" y="0" width="22" height="27" fill="url(#i4m)"/><path d="M16.5 0 H19 V26 H16.5Z M21 0 H24 V25 H21Z M26 0 H27.2 V24 H26Z M29.5 0 H32 V24 H29.5Z M34 0 H36 V20 H34Z" fill="#46664c"/><path d="M0 0 H14.5 L15 30 L0 34Z" fill="#1e2e16"/><path d="M2.5 0 H5.5 V30 H2.5Z M8.5 0 H13 V30 H8.5Z" fill="#0e150a"/><path d="M14 0 H17 V8 L15 14Z" fill="#35681f"/><path d="M36 0 H60 V33 L46 30 L34 27 L30 25 L33 18 L36 12Z" fill="#2b5617"/><path d="M42 4 L52 2 L58 10 L50 14Z M36 18 L46 16 L52 24 L40 26Z" fill="#3f7a22"/><path d="M44 22 L60 20 V32 L50 30Z" fill="#1c3a10"/><path d="M0 30 L14 27 L30 25.5 L46 30 L60 33 V44.5 H0Z" fill="#4ca028"/><path d="M0 34 L10 31 L16 34 L10 44.5 H0Z" fill="#357a1c"/><path d="M0 30 L6 27 L12 30 L6 33Z" fill="#2a5a18"/><path d="M22 27 L27 26.5 L44 34 L60 42 V44.5 H36 L30 36Z" fill="#4e3218"/><path d="M26.5 28 L29 28 L50 44.5 H42 L34 36Z" fill="#4c8a26"/><path d="M44 32 L60 36 V41 Z" fill="#60b030"/></g><rect width="60" height="44.5" filter="url(#nz)" opacity="0.18"/><rect width="60" height="44.5" filter="url(#nw)" opacity="0.06"/></svg><div class="jpg" style="top:37.6px">JPG</div></div>
<div class="st" style="left:-0.4px;top:61.8px;width:64px">★★★</div>
<div class="t c " style="left:0.5px;top:66.9px;width:63.5px;font-size:5.3px">Chemin forestier à R...</div>
<div class="t c i" style="left:0.5px;top:72.55000000000001px;width:63.5px;font-size:5.0px">3 étoiles</div>
<div class="t c i bl" style="left:0.5px;top:78.20000000000002px;width:63.5px;font-size:5.0px">Exemple, Paysage</div>
</div>
<div class="cell" style="left:454.4px;top:104px;height:88px;width:65px;background:#1f1f1f;box-shadow:inset 0 0 0 0.6px #343434">
<div class="th" style="left:2.7px;top:10.50px;height:44.5px"><svg width="59.4" height="44.5" viewBox="0 0 60 44.5" preserveAspectRatio="none" style="position:absolute;left:0;top:0"><defs><filter id="bl" x="-5%" y="-5%" width="110%" height="110%"><feGaussianBlur stdDeviation="0.7"/></filter><filter id="b2" x="-5%" y="-5%" width="110%" height="110%"><feGaussianBlur stdDeviation="1.3"/></filter><filter id="nz" x="0" y="0" width="100%" height="100%"><feTurbulence type="fractalNoise" baseFrequency="0.55" numOctaves="2" seed="7"/><feColorMatrix type="matrix" values="0 0 0 0 0  0 0 0 0 0  0 0 0 0 0  1.6 1.6 0 0 -1.1"/></filter><filter id="nw" x="0" y="0" width="100%" height="100%"><feTurbulence type="fractalNoise" baseFrequency="0.6" numOctaves="2" seed="3"/><feColorMatrix type="matrix" values="0 0 0 0 1  0 0 0 0 1  0 0 0 0 1  1.6 0 1.6 0 -1.25"/></filter></defs><rect width="60" height="44.5" fill="#d6dbe0"/><g filter="url(#bl)"><path d="M0 6 L8 7.5 L18 11 L24 12 L32 9 L40 7 L50 7 L60 7.5 V36 H0Z" fill="#de8450"/><path d="M0 6 L8 7.5 L18 10.5 L24 12.5 L14 13 L0 12Z" fill="#4e5e7c"/><path d="M0 13 L14 13 L24 12.5 L30 14 L22 18 L16 22 L0 24Z" fill="#e8925c"/><path d="M30 12 L40 8 L60 8 V26 L40 27 L24 24 L30 18Z" fill="#e48a52"/><path d="M0 24 L16 22 L30 26 L60 26 V40 H0Z" fill="#d87a42"/><path d="M0 32 L20 35 L40 37.5 L60 39 V44.5 H0Z" fill="#3a3a42"/><path d="M28 40 L60 41 V43 L28 42Z" fill="#a86a44"/></g><path d="M33 28.5 L35 27 L38 27.5 L46 27.5 L48 29 L49 35.5 L48 35.5 L47 32 L46 35.5 L45 35.5 L45 31.5 L40 31.5 L40 35.5 L39 35.5 L38.5 31 L35 29.5Z" fill="#3a3c44"/><path d="M35 27 L37.5 21.5 L38 21.5 L36 27.5Z" fill="#2a2a2e"/><path d="M44 28 L47 28 L47.5 31 L45 31Z" fill="#b8b8b4"/></svg><div class="jpg" style="top:37.6px">JPG</div></div>
<div class="st" style="left:-0.4px;top:61.8px;width:64px">★★★★</div>
<div class="t c " style="left:0.5px;top:66.9px;width:63.5px;font-size:5.3px">Antilope aux sabres l...</div>
<div class="t c i" style="left:0.5px;top:72.55000000000001px;width:63.5px;font-size:5.0px">Quatre étoiles</div>
<div class="t c i bl" style="left:0.5px;top:78.20000000000002px;width:63.5px;font-size:5.0px">Exemple, Faune, Pays...</div>
</div>
<div class="cell" style="left:181.3px;top:195px;height:88px;width:65px;background:#1f1f1f;box-shadow:inset 0 0 0 0.6px #343434">
<div class="th" style="left:2.7px;top:10.50px;height:44.5px"><svg width="59.4" height="44.5" viewBox="0 0 60 44.5" preserveAspectRatio="none" style="position:absolute;left:0;top:0"><defs><filter id="bl" x="-5%" y="-5%" width="110%" height="110%"><feGaussianBlur stdDeviation="0.7"/></filter><filter id="b2" x="-5%" y="-5%" width="110%" height="110%"><feGaussianBlur stdDeviation="1.3"/></filter><filter id="nz" x="0" y="0" width="100%" height="100%"><feTurbulence type="fractalNoise" baseFrequency="0.55" numOctaves="2" seed="7"/><feColorMatrix type="matrix" values="0 0 0 0 0  0 0 0 0 0  0 0 0 0 0  1.6 1.6 0 0 -1.1"/></filter><filter id="nw" x="0" y="0" width="100%" height="100%"><feTurbulence type="fractalNoise" baseFrequency="0.6" numOctaves="2" seed="3"/><feColorMatrix type="matrix" values="0 0 0 0 1  0 0 0 0 1  0 0 0 0 1  1.6 0 1.6 0 -1.25"/></filter></defs><defs><linearGradient id="i6g" x1="0" y1="0" x2="0" y2="1"><stop offset="0" stop-color="#f6efe6"/><stop offset="0.5" stop-color="#ecd6bc"/><stop offset="0.72" stop-color="#d09c6c"/><stop offset="1" stop-color="#6e4022"/></linearGradient></defs><rect width="60" height="44.5" fill="url(#i6g)"/><g filter="url(#b2)"><ellipse cx="25" cy="13" rx="15" ry="12" fill="#3c2c1a" opacity="0.85"/><ellipse cx="45" cy="12" rx="13" ry="12" fill="#3c2c1a" opacity="0.8"/><ellipse cx="11" cy="23" rx="9" ry="6" fill="#4c3a24" opacity="0.75"/><ellipse cx="53" cy="26" rx="7" ry="7" fill="#4c3a24" opacity="0.7"/><ellipse cx="36" cy="3" rx="20" ry="5" fill="#33241a" opacity="0.8"/><ellipse cx="36" cy="22" rx="10" ry="5" fill="#4c3a24" opacity="0.5"/><ellipse cx="26" cy="15" rx="2.6" ry="3.2" fill="#ffd890"/><ellipse cx="32" cy="34" rx="20" ry="4.5" fill="#e0a870" opacity="0.8"/></g><g filter="url(#bl)"><path d="M24.3 14 L26.5 22 L26.8 37 L23.8 37 L24.2 24 L22.8 16Z M37.3 12 L39 20 L38.8 35 L36.4 35 L36.8 22 L35.8 14Z" fill="#1a1008"/><path d="M25 22 L14 16 M25 20 L32 10 M38 20 L46 12 M38 22 L30 16 M38 24 L50 22 M24 26 L10 26 M38 26 L52 30" stroke="#20140a" stroke-width="1" fill="none"/><path d="M0 39 H60 V44.5 H0Z" fill="#5e3419"/><path d="M0 30 L8 28 L12 34 L0 36Z" fill="#5a3e24" opacity="0.7"/><path d="M44 30 L56 28 L60 34 L48 35Z" fill="#5a3e24" opacity="0.6"/></g></svg><div class="jpg" style="top:37.6px">JPG</div></div>
<div class="t c " style="left:0.5px;top:66.9px;width:63.5px;font-size:5.3px">Mouton sous un arbr...</div>
<div class="t c i" style="left:0.5px;top:72.55000000000001px;width:63.5px;font-size:5.0px">Pas détoiles</div>
<div class="t c i bl" style="left:0.5px;top:78.20000000000002px;width:63.5px;font-size:5.0px">Exemple, Paysage</div>
</div>
<div class="cell" style="left:249.4px;top:195px;height:88px;width:65px;background:#1f1f1f;box-shadow:inset 0 0 0 0.6px #343434">
<div class="th" style="left:2.7px;top:10.50px;height:44.5px"><svg width="59.4" height="44.5" viewBox="0 0 60 44.5" preserveAspectRatio="none" style="position:absolute;left:0;top:0"><defs><filter id="bl" x="-5%" y="-5%" width="110%" height="110%"><feGaussianBlur stdDeviation="0.7"/></filter><filter id="b2" x="-5%" y="-5%" width="110%" height="110%"><feGaussianBlur stdDeviation="1.3"/></filter><filter id="nz" x="0" y="0" width="100%" height="100%"><feTurbulence type="fractalNoise" baseFrequency="0.55" numOctaves="2" seed="7"/><feColorMatrix type="matrix" values="0 0 0 0 0  0 0 0 0 0  0 0 0 0 0  1.6 1.6 0 0 -1.1"/></filter><filter id="nw" x="0" y="0" width="100%" height="100%"><feTurbulence type="fractalNoise" baseFrequency="0.6" numOctaves="2" seed="3"/><feColorMatrix type="matrix" values="0 0 0 0 1  0 0 0 0 1  0 0 0 0 1  1.6 0 1.6 0 -1.25"/></filter></defs><rect width="60" height="44.5" fill="#3c7424"/><g filter="url(#bl)"><path d="M0 0 H60 V6 H0Z" fill="#5a8a34"/><path d="M38 6 L60 4 V30 L48 28 L36 24 L40 14Z" fill="#62a032"/><path d="M44 10 L56 8 L58 20 L48 22Z" fill="#86bc4c"/><path d="M12 10 L30 8 L32 20 L22 24 L12 22Z" fill="#2f6420"/><path d="M31 3 L36 3 L38 12 L37 20 L44 26 L60 30 V44.5 H16 L20 36 L14 32 L22 26 L30 22 L32 14Z" fill="#a8acb0"/><path d="M32 4 L35 4 L36 18 L32 18Z" fill="#e4e8ea"/><path d="M0 8 L6 6 L10 12 L8 22 L10 28 L4 30 L0 28Z" fill="#8e241e"/><path d="M2 14 L7 13 L7 18 L3 19Z M1 22 L6 21 L8 26 L2 27Z" fill="#d83c30"/><path d="M8 2 L16 1 L24 3 L26 8 L18 9 L10 8Z" fill="#d8bc9c"/><path d="M2 2 L9 3 L8 8 L2 8Z" fill="#c86858"/><path d="M44 0 L50 1 L48 5 L42 4Z" fill="#c89470"/><path d="M0 30 L8 32 L12 38 L8 44.5 H0Z" fill="#2f7a1e"/><path d="M20 24 L30 23 L32 28 L24 30Z" fill="#5a5248"/><path d="M14 32 L28 30 L38 33 L30 36 L18 36Z" fill="#2c2c28"/><path d="M24 38 L44 35 L60 37 V40 L30 42Z" fill="#3c3c38"/><path d="M20 41 L60 39 V44.5 H14Z" fill="#d8dcde"/><path d="M38 30 L60 32 V35 L40 34Z" fill="#e8eaec"/><path d="M8 41 L22 40 L20 44.5 H6Z" fill="#242420"/><path d="M36 24 L48 28 L60 30 V32 L44 30Z" fill="#1e2e16"/></g><rect width="60" height="44.5" filter="url(#nz)" opacity="0.2"/><rect width="60" height="44.5" filter="url(#nw)" opacity="0.1"/></svg><div class="jpg" style="top:37.6px">JPG</div></div>
<div class="st" style="left:-0.4px;top:61.8px;width:64px">★</div>
<div class="t c " style="left:0.5px;top:66.9px;width:63.5px;font-size:5.3px">Chute d’eau fleurie s...</div>
<div class="t c i" style="left:0.5px;top:72.55000000000001px;width:63.5px;font-size:5.0px">1 étoile</div>
<div class="t c i bl" style="left:0.5px;top:78.20000000000002px;width:63.5px;font-size:5.0px">Exemple, Paysage</div>
</div>
<div class="cell" style="left:181.3px;top:306.5px;height:87px;width:65px;background:#1c4c8c;box-shadow:inset 0 0 0 0.6px #2a5ea6">
<div class="th" style="left:2.7px;top:13.65px;height:38.8px"><svg width="59.4" height="38.8" viewBox="0 0 60 38.8" preserveAspectRatio="none" style="position:absolute;left:0;top:0"><defs><linearGradient id="i8a" x1="0" y1="0" x2="0" y2="1"><stop offset="0" stop-color="#efece0"/><stop offset="0.35" stop-color="#eee4c4"/><stop offset="0.6" stop-color="#e8d0a0"/><stop offset="0.75" stop-color="#d4b08c"/><stop offset="1" stop-color="#8a8480"/></linearGradient></defs><rect width="60" height="38.8" fill="url(#i8a)"/><g filter="url(#bl)"><path d="M7 25 L16 22.5 L26 20.5 L36 18.5 L42 17.3 L44.5 18.5 L48 22 L52 26.5 L60 29 V31 H7Z" fill="#a29088"/><path d="M0 29 L20 28.5 L52 28.5 L60 30 V34 H0Z" fill="#7a8084"/><path d="M0 32.5 L30 32 L60 33 V38.8 H0Z" fill="#3c423c"/><path d="M0 19 L2 18.5 L4 21 L6.5 26 L9 30 L11 38.8 H0Z" fill="#26341a"/><path d="M49 38.8 L51.5 31 L54 23 L56.5 15 L58 12 L60 13.5 V38.8Z" fill="#24321a"/><path d="M11 38.8 L13 34 L16 36 L18 38.8Z" fill="#2c3a20"/></g></svg><div class="jpg" style="top:31.9px">JPG</div></div>
<div class="st" style="left:-0.4px;top:62.099999999999994px;width:64px">★★★</div>
<div class="t c " style="left:0.5px;top:67.2px;width:63.5px;font-size:5.3px">&nbsp;</div>
<div class="t c i" style="left:0.5px;top:72.85000000000001px;width:63.5px;font-size:5.0px">La sainte victoire</div>
<div class="t c i" style="left:0.5px;top:78.50000000000001px;width:63.5px;font-size:5.0px">Nature, Paysage</div>
</div>
<svg class="a" style="left:236.5px;top:309px" width="6" height="6" viewBox="0 0 6 6"><circle cx="3" cy="3" r="2.3" fill="#4a6a9a" stroke="#9ab0d0" stroke-width="0.6"/><path d="M1.4 2 L3 2.6 L2.4 4.2 L4 3.4" stroke="#a8bcd8" stroke-width="0.6" fill="none"/></svg>
<div class="a" style="left:42px;top:405.2px;width:668px;height:10.6px;background:#2e2e2e"></div>
<div class="t" style="left:42.5px;top:407px;font-size:5.3px">DSC00808.JPG (24 of 54)</div>
<div class="t" style="left:342.5px;top:407px;font-size:5.3px">No active filter</div>
<div class="t" style="left:542px;top:407px;font-size:5.3px">No active process</div>
<div class="a" style="left:561px;top:28px;width:141px;height:378px;background:#2e2e2e"></div>
<svg class="a" style="left:562px;top:28px" width="140" height="336" viewBox="0 0 140 336"><defs><clipPath id="mc"><rect x="1.1" y="0.2" width="137.4" height="334.5"/></clipPath><filter id="mb" x="-20%" y="-20%" width="140%" height="140%"><feGaussianBlur stdDeviation="25"/></filter><linearGradient id="tg" x1="0" y1="0" x2="0" y2="1"><stop offset="0" stop-color="#e6e2cc"/><stop offset="0.4" stop-color="#e4cfa0"/><stop offset="0.62" stop-color="#c8a078"/><stop offset="0.8" stop-color="#5a5c60"/><stop offset="1" stop-color="#2c3034"/></linearGradient></defs><g clip-path="url(#mc)" style="font-family:'DejaVu Sans','Liberation Sans',sans-serif" text-rendering="geometricPrecision"><rect x="0" y="0" width="140" height="336" fill="#ece9df"/><g transform="translate(0,0) scale(0.18667)"><rect x="0" y="0" width="760" height="440" fill="#c6e79e"/><path d="M390 0 H452 L470 60 L465 110 L440 130 L445 180 L430 250 L405 240 L385 200 L395 150 L400 100 L385 50Z" fill="#ece9df"/><path d="M95 75 L170 80 L165 120 L130 150 L125 200 L180 260 L170 285 L120 250 L80 215 L85 150Z" fill="#ece9df"/><path d="M557 0 H675 L650 55 L616 112 L595 65Z" fill="#ece9df"/><path d="M0 170 L30 175 L40 200 L20 230 L0 225Z" fill="#ece9df"/><path d="M0 325 L60 355 L150 392 L240 425 L0 425Z" fill="#ece9df"/><path d="M0 200 L80 180 L200 160 L300 130 L370 120 L380 190 L390 230 L420 260 L470 300 L500 330" fill="none" stroke="#ffffff" stroke-width="2.2" stroke-linecap="round" stroke-linejoin="round"/><path d="M200 160 L230 240 L270 290 L300 340 L330 410" fill="none" stroke="#ffffff" stroke-width="2.2" stroke-linecap="round" stroke-linejoin="round"/><path d="M210 165 L215 260 L240 330 L210 380" fill="none" stroke="#ffffff" stroke-width="2.2" stroke-linecap="round" stroke-linejoin="round"/><path d="M380 190 L300 250 L250 290 L160 330 L60 310" fill="none" stroke="#ffffff" stroke-width="2.2" stroke-linecap="round" stroke-linejoin="round"/><path d="M380 190 L480 170 L560 160 L620 190 L700 230 L750 260" fill="none" stroke="#ffffff" stroke-width="2.2" stroke-linecap="round" stroke-linejoin="round"/><path d="M480 170 L500 250 L500 330 L540 400" fill="none" stroke="#ffffff" stroke-width="2.2" stroke-linecap="round" stroke-linejoin="round"/><path d="M620 190 L560 260 L500 330 L420 350 L350 420" fill="none" stroke="#ffffff" stroke-width="2.2" stroke-linecap="round" stroke-linejoin="round"/><path d="M500 330 L600 340 L680 370 L750 400" fill="none" stroke="#ffffff" stroke-width="2.2" stroke-linecap="round" stroke-linejoin="round"/><path d="M620 190 L650 100 L700 40 L740 0" fill="none" stroke="#ffffff" stroke-width="2.2" stroke-linecap="round" stroke-linejoin="round"/><path d="M560 160 L540 80 L500 30 L480 0" fill="none" stroke="#ffffff" stroke-width="2.2" stroke-linecap="round" stroke-linejoin="round"/><path d="M370 120 L330 60 L300 0" fill="none" stroke="#ffffff" stroke-width="2.2" stroke-linecap="round" stroke-linejoin="round"/><path d="M110 0 L150 60 L210 160" fill="none" stroke="#ffffff" stroke-width="2.2" stroke-linecap="round" stroke-linejoin="round"/><path d="M650 260 L640 330 L700 380" fill="none" stroke="#ffffff" stroke-width="2.2" stroke-linecap="round" stroke-linejoin="round"/><path d="M0 290 L60 318 L140 350 L240 400 L330 418 L480 414 L600 400 L750 385" fill="none" stroke="#fbe59a" stroke-width="5" stroke-linecap="round" stroke-linejoin="round"/><ellipse cx="383" cy="188" rx="9" ry="10" fill="#7cb4f2"/><path d="M0 365 L40 395 L80 423" fill="none" stroke="#9cc4f0" stroke-width="2.5" stroke-linecap="round" stroke-linejoin="round"/><text x="360" y="113.125" font-size="17.5" font-weight="normal" text-anchor="middle" fill="#262626" stroke="#262626" stroke-width="0.6" style="-webkit-text-stroke:0">Cabrières-d’Aigues</text><text x="208" y="153.125" font-size="17.5" font-weight="normal" text-anchor="middle" fill="#262626" stroke="#262626" stroke-width="0.6" style="-webkit-text-stroke:0">Cucuron</text><text x="460" y="166.125" font-size="17.5" font-weight="normal" text-anchor="middle" fill="#262626" stroke="#262626" stroke-width="0.6" style="-webkit-text-stroke:0">Saint-Martin-de-la-Brasque</text><text x="610" y="192.125" font-size="17.5" font-weight="normal" text-anchor="middle" fill="#262626" stroke="#262626" stroke-width="0.6" style="-webkit-text-stroke:0">Grambois</text><text x="273" y="281.125" font-size="17.5" font-weight="normal" text-anchor="middle" fill="#262626" stroke="#262626" stroke-width="0.6" style="-webkit-text-stroke:0">Ansouis</text><text x="38" y="293.125" font-size="17.5" font-weight="normal" text-anchor="middle" fill="#262626" stroke="#262626" stroke-width="0.6" style="-webkit-text-stroke:0">Cadenet</text><text x="490" y="326.125" font-size="17.5" font-weight="normal" text-anchor="middle" fill="#262626" stroke="#262626" stroke-width="0.6" style="-webkit-text-stroke:0">La Tour-d’Aigues</text><text x="198" y="379.125" font-size="17.5" font-weight="normal" text-anchor="middle" fill="#262626" stroke="#262626" stroke-width="0.6" style="-webkit-text-stroke:0">Villelaure</text><text x="540" y="413.125" font-size="17.5" font-weight="normal" text-anchor="middle" fill="#262626" stroke="#262626" stroke-width="0.6" style="-webkit-text-stroke:0">La Bastidonne</text><text x="22" y="188.125" font-size="17.5" font-weight="normal" text-anchor="middle" fill="#262626" stroke="#262626" stroke-width="0.6" style="-webkit-text-stroke:0">marin</text><rect x="98.0" y="330" width="54.0" height="20" rx="2.5" fill="#f7d64a"/><text x="125" y="344.5" font-size="12.5" font-weight="bold" text-anchor="middle" fill="#333" style="-webkit-text-stroke:0">D973</text><rect x="245.0" y="400" width="54.0" height="20" rx="2.5" fill="#f7d64a"/><text x="272" y="414.5" font-size="12.5" font-weight="bold" text-anchor="middle" fill="#333" style="-webkit-text-stroke:0">D973</text><rect x="698.0" y="375" width="54.0" height="20" rx="2.5" fill="#f7d64a"/><text x="725" y="389.5" font-size="12.5" font-weight="bold" text-anchor="middle" fill="#333" style="-webkit-text-stroke:0">D973</text></g><g transform="translate(0,79) scale(0.18667)"><path d="M110 -5 L760 -5 L760 85 L690 105 L600 125 L480 130 L380 110 L300 80 L220 45 L160 15Z" fill="#c6e79e"/><path d="M0 0 L100 12 L160 28 L240 60 L300 85 L380 114 L480 134 L600 129 L690 109 L750 88" fill="none" stroke="#9cc4f0" stroke-width="2.5" stroke-linecap="round" stroke-linejoin="round"/><path d="M0 60 L80 90 L170 120 L300 125 L350 150" fill="none" stroke="#ffffff" stroke-width="2.2" stroke-linecap="round" stroke-linejoin="round"/><path d="M170 120 L175 200 L150 260 L160 330 L130 423" fill="none" stroke="#ffffff" stroke-width="2.2" stroke-linecap="round" stroke-linejoin="round"/><path d="M300 125 L280 200 L260 250 L280 330 L250 423" fill="none" stroke="#ffffff" stroke-width="2.2" stroke-linecap="round" stroke-linejoin="round"/><path d="M20 40 L60 120 L40 200 L30 300 L60 400" fill="none" stroke="#ffffff" stroke-width="2.2" stroke-linecap="round" stroke-linejoin="round"/><path d="M0 300 L80 330 L170 400 L200 423" fill="none" stroke="#ffffff" stroke-width="2.2" stroke-linecap="round" stroke-linejoin="round"/><path d="M560 185 L600 200 L620 260 L610 350 L640 423" fill="none" stroke="#ffffff" stroke-width="2.2" stroke-linecap="round" stroke-linejoin="round"/><path d="M440 230 L470 300 L460 423" fill="none" stroke="#ffffff" stroke-width="2.2" stroke-linecap="round" stroke-linejoin="round"/><path d="M350 160 L430 170 L520 165" fill="none" stroke="#ffffff" stroke-width="2.2" stroke-linecap="round" stroke-linejoin="round"/><path d="M680 130 L720 200 L750 215" fill="none" stroke="#ffffff" stroke-width="2.2" stroke-linecap="round" stroke-linejoin="round"/><path d="M330 15 L350 70 L360 120" fill="none" stroke="#fbe59a" stroke-width="4.5" stroke-linecap="round" stroke-linejoin="round"/><path d="M700 125 L640 160 L560 185 L450 200 L400 230 L385 265 L370 300" fill="none" stroke="#fbe59a" stroke-width="4.5" stroke-linecap="round" stroke-linejoin="round"/><path d="M760 95 L680 125 L600 140 L470 140 L385 130 L358 150 L346 200 L340 250 L350 300 L340 350 L320 390 L296 430" fill="none" stroke="#f6c069" stroke-width="8" stroke-linecap="round" stroke-linejoin="round"/><path d="M0 360 L30 390 L60 423" fill="none" stroke="#fbe59a" stroke-width="4.5" stroke-linecap="round" stroke-linejoin="round"/><ellipse cx="65" cy="178" rx="10" ry="5" fill="#8cbcf2" transform="translate(0,0)"/><text x="370" y="17.35" font-size="21" font-weight="normal" text-anchor="middle" fill="#333" stroke="#333" stroke-width="0.6" style="-webkit-text-stroke:0">Pertuis</text><text x="95" y="44.125" font-size="17.5" font-weight="normal" text-anchor="middle" fill="#262626" stroke="#262626" stroke-width="0.6" style="-webkit-text-stroke:0">Saint-Estève-Janson</text><text x="197" y="126.125" font-size="17.5" font-weight="normal" text-anchor="middle" fill="#262626" stroke="#262626" stroke-width="0.6" style="-webkit-text-stroke:0">Le Puy-Sainte-Réparade</text><text x="580" y="178.125" font-size="17.5" font-weight="normal" text-anchor="middle" fill="#262626" stroke="#262626" stroke-width="0.6" style="-webkit-text-stroke:0">Peyrolles-en-Provence</text><text x="440" y="221.125" font-size="17.5" font-weight="normal" text-anchor="middle" fill="#262626" stroke="#262626" stroke-width="0.6" style="-webkit-text-stroke:0">Meyrargues</text><text x="728" y="221.125" font-size="17.5" font-weight="normal" text-anchor="middle" fill="#262626" stroke="#262626" stroke-width="0.6" style="-webkit-text-stroke:0">Jouques</text><text x="325" y="358.125" font-size="17.5" font-weight="normal" text-anchor="middle" fill="#262626" stroke="#262626" stroke-width="0.6" style="-webkit-text-stroke:0">Venelles</text><rect x="578.25" y="130" width="43.5" height="20" rx="2.5" fill="#d8433c"/><text x="600" y="144.5" font-size="12.5" font-weight="bold" text-anchor="middle" fill="#fff" style="-webkit-text-stroke:0">A51</text><rect x="706.25" y="90" width="43.5" height="20" rx="2.5" fill="#d8433c"/><text x="728" y="104.5" font-size="12.5" font-weight="bold" text-anchor="middle" fill="#fff" style="-webkit-text-stroke:0">A51</text><rect x="338.25" y="293" width="43.5" height="20" rx="2.5" fill="#d8433c"/><text x="360" y="307.5" font-size="12.5" font-weight="bold" text-anchor="middle" fill="#fff" style="-webkit-text-stroke:0">A51</text><rect x="363.25" y="257" width="43.5" height="20" rx="2.5" fill="#f7d64a"/><text x="385" y="271.5" font-size="12.5" font-weight="bold" text-anchor="middle" fill="#333" style="-webkit-text-stroke:0">D96</text><rect x="-11.5" y="355" width="33.0" height="20" rx="2.5" fill="#f7d64a"/><text x="5" y="369.5" font-size="12.5" font-weight="bold" text-anchor="middle" fill="#333" style="-webkit-text-stroke:0">D7</text></g><g transform="translate(0,158) scale(0.18667)"><g filter="url(#mb)"><ellipse cx="190" cy="200" rx="120" ry="80" fill="#f4f2ee"/><ellipse cx="110" cy="330" rx="80" ry="60" fill="#f1efea"/><ellipse cx="560" cy="350" rx="150" ry="50" fill="#f1efea"/><ellipse cx="330" cy="330" rx="90" ry="50" fill="#f0eee9"/></g><path d="M0 40 L60 60 L120 50 L190 80" fill="none" stroke="#ffffff" stroke-width="2.6" stroke-linecap="round" stroke-linejoin="round"/><path d="M330 0 L360 60 L340 110 L300 140" fill="none" stroke="#ffffff" stroke-width="2.6" stroke-linecap="round" stroke-linejoin="round"/><path d="M300 140 L380 110 L500 100 L560 70 L640 75 L750 60" fill="none" stroke="#ffffff" stroke-width="2.6" stroke-linecap="round" stroke-linejoin="round"/><path d="M230 210 L260 300 L240 380 L270 423" fill="none" stroke="#ffffff" stroke-width="2.6" stroke-linecap="round" stroke-linejoin="round"/><path d="M330 180 L420 200 L470 240 L560 250 L650 230 L750 250" fill="none" stroke="#ffffff" stroke-width="2.6" stroke-linecap="round" stroke-linejoin="round"/><path d="M30 200 L60 280 L40 360 L60 423" fill="none" stroke="#ffffff" stroke-width="2.6" stroke-linecap="round" stroke-linejoin="round"/><path d="M350 250 L330 320 L380 380 L360 423" fill="none" stroke="#ffffff" stroke-width="2.6" stroke-linecap="round" stroke-linejoin="round"/><path d="M600 345 L640 280 L700 250" fill="none" stroke="#ffffff" stroke-width="2.6" stroke-linecap="round" stroke-linejoin="round"/><path d="M130 330 L200 340 L300 380" fill="none" stroke="#ffffff" stroke-width="2.6" stroke-linecap="round" stroke-linejoin="round"/><path d="M0 300 L60 290 L125 300" fill="none" stroke="#ffffff" stroke-width="2.6" stroke-linecap="round" stroke-linejoin="round"/><path d="M100 120 L150 160 L190 200 L240 180 L300 140" fill="none" stroke="#ffffff" stroke-width="2.6" stroke-linecap="round" stroke-linejoin="round"/><path d="M120 240 L190 210 L260 200 L330 180" fill="none" stroke="#ffffff" stroke-width="2.6" stroke-linecap="round" stroke-linejoin="round"/><path d="M150 260 L200 280 L240 330" fill="none" stroke="#ffffff" stroke-width="2.6" stroke-linecap="round" stroke-linejoin="round"/><path d="M80 160 L100 220 L140 250" fill="none" stroke="#ffffff" stroke-width="2.6" stroke-linecap="round" stroke-linejoin="round"/><path d="M200 120 L240 160 L250 210" fill="none" stroke="#ffffff" stroke-width="2.6" stroke-linecap="round" stroke-linejoin="round"/><path d="M60 330 L100 380 L90 423" fill="none" stroke="#ffffff" stroke-width="2.6" stroke-linecap="round" stroke-linejoin="round"/><path d="M160 380 L220 400 L240 423" fill="none" stroke="#ffffff" stroke-width="2.6" stroke-linecap="round" stroke-linejoin="round"/><path d="M420 260 L480 300 L520 330" fill="none" stroke="#ffffff" stroke-width="2.6" stroke-linecap="round" stroke-linejoin="round"/><path d="M560 300 L620 320 L680 300" fill="none" stroke="#ffffff" stroke-width="2.6" stroke-linecap="round" stroke-linejoin="round"/><path d="M480 380 L560 400 L640 390 L750 410" fill="none" stroke="#ffffff" stroke-width="2.6" stroke-linecap="round" stroke-linejoin="round"/><path d="M640 360 L660 423" fill="none" stroke="#ffffff" stroke-width="2.6" stroke-linecap="round" stroke-linejoin="round"/><path d="M0 130 L70 140 L130 165 L185 200" fill="none" stroke="#fbe59a" stroke-width="4.5" stroke-linecap="round" stroke-linejoin="round"/><path d="M60 0 L110 50 L150 80 L180 140 L185 200" fill="none" stroke="#fbe59a" stroke-width="4.5" stroke-linecap="round" stroke-linejoin="round"/><path d="M185 215 L140 250 L125 330 L120 430" fill="none" stroke="#fbe59a" stroke-width="4.5" stroke-linecap="round" stroke-linejoin="round"/><path d="M600 345 L545 380 L530 430" fill="none" stroke="#fbe59a" stroke-width="4.5" stroke-linecap="round" stroke-linejoin="round"/><path d="M440 330 L440 362 L300 380 L270 430" fill="none" stroke="#fbe59a" stroke-width="4.5" stroke-linecap="round" stroke-linejoin="round"/><path d="M185 200 L120 190 L60 180 L0 200" fill="none" stroke="#fbe59a" stroke-width="4.5" stroke-linecap="round" stroke-linejoin="round"/><path d="M600 345 L700 320 L750 300" fill="none" stroke="#fbe59a" stroke-width="4.5" stroke-linecap="round" stroke-linejoin="round"/><path d="M750 395 L700 380 L600 345" fill="none" stroke="#fbe59a" stroke-width="4.5" stroke-linecap="round" stroke-linejoin="round"/><path d="M296 -5 L270 40 L230 75 L200 120 L185 200" fill="none" stroke="#f6c069" stroke-width="8" stroke-linecap="round" stroke-linejoin="round"/><path d="M185 210 L270 235 L350 240 L400 260 L440 300 L500 335 L600 345 L690 368 L760 372" fill="none" stroke="#f6c069" stroke-width="8" stroke-linecap="round" stroke-linejoin="round"/><path d="M185 210 L150 240 L130 260 L60 300 L0 330" fill="none" stroke="#f6c069" stroke-width="6" stroke-linecap="round" stroke-linejoin="round"/><path d="M488 100 L525 95 L518 108 L492 112Z" fill="#a8ccf4"/><text x="425" y="116.125" font-size="17.5" font-weight="normal" text-anchor="middle" fill="#262626" stroke="#262626" stroke-width="0.6" style="-webkit-text-stroke:0">Saint-Marc-Jaumegarde</text><text x="630" y="88.125" font-size="17.5" font-weight="normal" text-anchor="middle" fill="#262626" stroke="#262626" stroke-width="0.6" style="-webkit-text-stroke:0">Vauvenargues</text><text x="400" y="207.125" font-size="17.5" font-weight="normal" text-anchor="middle" fill="#262626" stroke="#262626" stroke-width="0.6" style="-webkit-text-stroke:0">Le Tholonet</text><text x="488" y="244.125" font-size="17.5" font-weight="normal" text-anchor="middle" fill="#262626" stroke="#262626" stroke-width="0.6" style="-webkit-text-stroke:0">Beaurecueil</text><text x="352" y="331.125" font-size="17.5" font-weight="normal" text-anchor="middle" fill="#262626" stroke="#262626" stroke-width="0.6" style="-webkit-text-stroke:0">Meyreuil</text><text x="155" y="333.125" font-size="17.5" font-weight="normal" text-anchor="middle" fill="#262626" stroke="#262626" stroke-width="0.6" style="-webkit-text-stroke:0">Luynes</text><text x="668" y="354.125" font-size="17.5" font-weight="normal" text-anchor="middle" fill="#262626" stroke="#262626" stroke-width="0.6" style="-webkit-text-stroke:0">Rousset</text><text x="68" y="265.85" font-size="11" font-weight="normal" text-anchor="middle" fill="#777" stroke="#777" stroke-width="0.6" style="-webkit-text-stroke:0">LES MILLES</text><text x="230" y="183.7" font-size="22" font-weight="bold" text-anchor="middle" fill="#333" stroke="#333" stroke-width="0.6" style="-webkit-text-stroke:0">Aix-en-Provence</text><rect x="121.25" y="58" width="43.5" height="20" rx="2.5" fill="#f7d64a"/><text x="143" y="72.5" font-size="12.5" font-weight="bold" text-anchor="middle" fill="#333" style="-webkit-text-stroke:0">D7N</text><rect x="188.25" y="67" width="43.5" height="20" rx="2.5" fill="#d8433c"/><text x="210" y="81.5" font-size="12.5" font-weight="bold" text-anchor="middle" fill="#fff" style="-webkit-text-stroke:0">A51</text><rect x="38.25" y="130" width="43.5" height="20" rx="2.5" fill="#f7d64a"/><text x="60" y="144.5" font-size="12.5" font-weight="bold" text-anchor="middle" fill="#333" style="-webkit-text-stroke:0">D10</text><rect x="363.25" y="235" width="43.5" height="20" rx="2.5" fill="#f7d64a"/><text x="385" y="249.5" font-size="12.5" font-weight="bold" text-anchor="middle" fill="#333" style="-webkit-text-stroke:0">D7N</text><rect x="416.5" y="292" width="33.0" height="20" rx="2.5" fill="#d8433c"/><text x="433" y="306.5" font-size="12.5" font-weight="bold" text-anchor="middle" fill="#fff" style="-webkit-text-stroke:0">A8</text><rect x="435.5" y="352" width="33.0" height="20" rx="2.5" fill="#f7d64a"/><text x="452" y="366.5" font-size="12.5" font-weight="bold" text-anchor="middle" fill="#333" style="-webkit-text-stroke:0">D6</text><rect x="690.25" y="306" width="43.5" height="20" rx="2.5" fill="#f7d64a"/><text x="712" y="320.5" font-size="12.5" font-weight="bold" text-anchor="middle" fill="#333" style="-webkit-text-stroke:0">D7N</text><rect x="683.5" y="360" width="33.0" height="20" rx="2.5" fill="#d8433c"/><text x="700" y="374.5" font-size="12.5" font-weight="bold" text-anchor="middle" fill="#fff" style="-webkit-text-stroke:0">A8</text><rect x="470.5" y="405" width="33.0" height="20" rx="2.5" fill="#f7d64a"/><text x="487" y="419.5" font-size="12.5" font-weight="bold" text-anchor="middle" fill="#333" style="-webkit-text-stroke:0">D6</text><rect x="-11.5" y="142" width="33.0" height="20" rx="2.5" fill="#d8433c"/><text x="5" y="156.5" font-size="12.5" font-weight="bold" text-anchor="middle" fill="#fff" style="-webkit-text-stroke:0">A8</text><rect x="157" y="82" width="145" height="96" fill="#111"/><rect x="160" y="85" width="139" height="90" fill="url(#tg)"/><path d="M161 148 L200 138 L235 128 L262 125 L275 137 L298 146 V160 H161Z" fill="#8a7a70"/><path d="M161 130 L172 140 L178 174 H161Z" fill="#1c241a"/><path d="M284 174 L290 120 L298 112 V174Z" fill="#1c241a"/><path d="M161 162 L298 160 V174 H161Z" fill="#2a261e"/><rect x="220" y="118" width="18" height="24" fill="#fff" opacity="0.85"/><text x="229" y="137" font-size="18" font-weight="bold" text-anchor="middle" fill="#111" style="-webkit-text-stroke:0">1</text></g><g transform="translate(0,237) scale(0.18667)"><g filter="url(#mb)"><ellipse cx="290" cy="50" rx="110" ry="45" fill="#f2f0ec"/><ellipse cx="560" cy="120" rx="90" ry="90" fill="#f1efea"/><ellipse cx="60" cy="380" rx="110" ry="70" fill="#f3f1ed"/><ellipse cx="620" cy="300" rx="70" ry="60" fill="#f1efea"/></g><path d="M110 140 L200 150 L300 190 L380 170 L430 180 L470 230 L510 270 L470 300 L400 320 L330 350 L210 310 L120 330 L70 325 L110 270 L95 210 L120 180Z" fill="#d1e5c7"/><path d="M240 40 L300 100 L400 130 L470 200 L520 260" fill="none" stroke="#ffffff" stroke-width="2.6" stroke-linecap="round" stroke-linejoin="round"/><path d="M330 30 L420 60 L480 110 L540 160" fill="none" stroke="#ffffff" stroke-width="2.6" stroke-linecap="round" stroke-linejoin="round"/><path d="M0 240 L80 250 L100 330 L60 423" fill="none" stroke="#ffffff" stroke-width="2.6" stroke-linecap="round" stroke-linejoin="round"/><path d="M380 170 L360 100 L300 60" fill="none" stroke="#ffffff" stroke-width="2.6" stroke-linecap="round" stroke-linejoin="round"/><path d="M510 270 L560 300 L600 380" fill="none" stroke="#ffffff" stroke-width="2.6" stroke-linecap="round" stroke-linejoin="round"/><path d="M400 320 L380 380 L300 400 L200 423" fill="none" stroke="#ffffff" stroke-width="2.6" stroke-linecap="round" stroke-linejoin="round"/><path d="M640 40 L700 80 L750 70" fill="none" stroke="#ffffff" stroke-width="2.6" stroke-linecap="round" stroke-linejoin="round"/><path d="M575 180 L500 200 L450 260" fill="none" stroke="#ffffff" stroke-width="2.6" stroke-linecap="round" stroke-linejoin="round"/><path d="M200 30 L260 60 L300 20" fill="none" stroke="#ffffff" stroke-width="2.6" stroke-linecap="round" stroke-linejoin="round"/><path d="M240 80 L320 90 L400 70 L470 40" fill="none" stroke="#ffffff" stroke-width="2.6" stroke-linecap="round" stroke-linejoin="round"/><path d="M420 110 L480 150 L540 140" fill="none" stroke="#ffffff" stroke-width="2.6" stroke-linecap="round" stroke-linejoin="round"/><path d="M30 60 L60 120 L40 180" fill="none" stroke="#ffffff" stroke-width="2.6" stroke-linecap="round" stroke-linejoin="round"/><path d="M20 340 L80 380 L140 400" fill="none" stroke="#ffffff" stroke-width="2.6" stroke-linecap="round" stroke-linejoin="round"/><path d="M0 400 L60 410 L120 423" fill="none" stroke="#ffffff" stroke-width="2.6" stroke-linecap="round" stroke-linejoin="round"/><path d="M600 260 L660 250 L720 280" fill="none" stroke="#ffffff" stroke-width="2.6" stroke-linecap="round" stroke-linejoin="round"/><path d="M470 230 L540 220 L575 180" fill="none" stroke="#ffffff" stroke-width="2.6" stroke-linecap="round" stroke-linejoin="round"/><path d="M620 120 L680 160 L750 150" fill="none" stroke="#ffffff" stroke-width="2.6" stroke-linecap="round" stroke-linejoin="round"/><path d="M330 22 L200 50 L172 86 L100 100" fill="none" stroke="#fbe59a" stroke-width="4.5" stroke-linecap="round" stroke-linejoin="round"/><path d="M480 -5 L500 40 L540 100 L575 180" fill="none" stroke="#fbe59a" stroke-width="4.5" stroke-linecap="round" stroke-linejoin="round"/><path d="M100 -5 L100 60 L80 100 L40 130 L10 190 L-5 200" fill="none" stroke="#f6c069" stroke-width="8" stroke-linecap="round" stroke-linejoin="round"/><path d="M545 -5 L560 80 L575 180 L590 230 L640 280 L670 330 L680 400 L650 430" fill="none" stroke="#f6c069" stroke-width="8" stroke-linecap="round" stroke-linejoin="round"/><path d="M-5 295 L10 360 L40 430" fill="none" stroke="#f6c069" stroke-width="8" stroke-linecap="round" stroke-linejoin="round"/><circle cx="110" cy="343" r="6" fill="#7cb4f2"/><text x="295" y="34.7" font-size="22" font-weight="normal" text-anchor="middle" fill="#333" stroke="#333" stroke-width="0.6" style="-webkit-text-stroke:0">Gardanne</text><text x="525" y="26.125" font-size="17.5" font-weight="normal" text-anchor="middle" fill="#262626" stroke="#262626" stroke-width="0.6" style="-webkit-text-stroke:0">Fuveau</text><text x="57" y="73.125" font-size="17.5" font-weight="normal" text-anchor="middle" fill="#262626" stroke="#262626" stroke-width="0.6" style="-webkit-text-stroke:0">Cabriès</text><text x="480" y="106.125" font-size="17.5" font-weight="normal" text-anchor="middle" fill="#262626" stroke="#262626" stroke-width="0.6" style="-webkit-text-stroke:0">Gréasque</text><text x="380" y="166.125" font-size="17.5" font-weight="normal" text-anchor="middle" fill="#262626" stroke="#262626" stroke-width="0.6" style="-webkit-text-stroke:0">Mimet</text><text x="64" y="221.125" font-size="17.5" font-weight="normal" text-anchor="middle" fill="#262626" stroke="#262626" stroke-width="0.6" style="-webkit-text-stroke:0">-les-Vallons</text><text x="568" y="274.125" font-size="17.5" font-weight="normal" text-anchor="middle" fill="#262626" stroke="#262626" stroke-width="0.6" style="-webkit-text-stroke:0">Peypin</text><rect x="83.25" y="2" width="43.5" height="20" rx="2.5" fill="#d8433c"/><text x="105" y="16.5" font-size="12.5" font-weight="bold" text-anchor="middle" fill="#fff" style="-webkit-text-stroke:0">A51</text><rect x="158.5" y="78" width="33.0" height="20" rx="2.5" fill="#f7d64a"/><text x="175" y="92.5" font-size="12.5" font-weight="bold" text-anchor="middle" fill="#333" style="-webkit-text-stroke:0">D6</text><rect x="556.25" y="220" width="43.5" height="20" rx="2.5" fill="#d8433c"/><text x="578" y="234.5" font-size="12.5" font-weight="bold" text-anchor="middle" fill="#fff" style="-webkit-text-stroke:0">A52</text><rect x="706.25" y="-8" width="43.5" height="20" rx="2.5" fill="#f7d64a"/><text x="728" y="6.5" font-size="12.5" font-weight="bold" text-anchor="middle" fill="#333" style="-webkit-text-stroke:0">D7N</text></g><g transform="translate(0,272) scale(0.18667)"><g filter="url(#mb)"><ellipse cx="120" cy="260" rx="170" ry="80" fill="#f4f2ee"/></g><path d="M360 150 L420 130 L520 120 L600 130 L650 140 L640 190 L590 230 L540 280 L480 300 L400 300 L350 250 L340 200Z" fill="#d1e5c7"/><path d="M0 240 L100 230 L200 250 L300 280 L340 335" fill="none" stroke="#ffffff" stroke-width="2.6" stroke-linecap="round" stroke-linejoin="round"/><path d="M60 200 L120 260 L160 335" fill="none" stroke="#ffffff" stroke-width="2.6" stroke-linecap="round" stroke-linejoin="round"/><path d="M560 240 L600 300 L640 335" fill="none" stroke="#ffffff" stroke-width="2.6" stroke-linecap="round" stroke-linejoin="round"/><path d="M30 220 L90 250 L150 240 L220 260" fill="none" stroke="#ffffff" stroke-width="2.6" stroke-linecap="round" stroke-linejoin="round"/><path d="M80 290 L140 310 L200 300 L260 330" fill="none" stroke="#ffffff" stroke-width="2.6" stroke-linecap="round" stroke-linejoin="round"/><path d="M100 200 L160 220 L230 230" fill="none" stroke="#ffffff" stroke-width="2.6" stroke-linecap="round" stroke-linejoin="round"/><path d="M20 300 L60 320 L80 335" fill="none" stroke="#ffffff" stroke-width="2.6" stroke-linecap="round" stroke-linejoin="round"/><path d="M180 200 L200 240 L250 270" fill="none" stroke="#ffffff" stroke-width="2.6" stroke-linecap="round" stroke-linejoin="round"/><path d="M20 270 L100 268 L180 280 L250 300" fill="none" stroke="#f6c069" stroke-width="7" stroke-linecap="round" stroke-linejoin="round"/><path d="M0 110 L20 200 L50 270 L30 335" fill="none" stroke="#f6c069" stroke-width="8" stroke-linecap="round" stroke-linejoin="round"/><path d="M670 165 L680 215 L650 260 L620 300 L600 335" fill="none" stroke="#f6c069" stroke-width="8" stroke-linecap="round" stroke-linejoin="round"/><text x="640" y="113.125" font-size="17.5" font-weight="normal" text-anchor="middle" fill="#262626" stroke="#262626" stroke-width="0.6" style="-webkit-text-stroke:0">La Destrousse</text><text x="268" y="221.125" font-size="17.5" font-weight="normal" text-anchor="middle" fill="#262626" stroke="#262626" stroke-width="0.6" style="-webkit-text-stroke:0">Plan-de-Cuques</text><text x="320" y="257.35" font-size="21" font-weight="normal" text-anchor="middle" fill="#333" stroke="#333" stroke-width="0.6" style="-webkit-text-stroke:0">Allauch</text><text x="630" y="209.125" font-size="17.5" font-weight="normal" text-anchor="middle" fill="#262626" stroke="#262626" stroke-width="0.6" style="-webkit-text-stroke:0">Roquevaire</text><rect x="618.25" y="240" width="43.5" height="20" rx="2.5" fill="#d8433c"/><text x="640" y="254.5" font-size="12.5" font-weight="bold" text-anchor="middle" fill="#fff" style="-webkit-text-stroke:0">A52</text><rect x="-6.5" y="158" width="33.0" height="20" rx="2.5" fill="#d8433c"/><text x="10" y="172.5" font-size="12.5" font-weight="bold" text-anchor="middle" fill="#fff" style="-webkit-text-stroke:0">A7</text><rect x="121.0" y="290" width="54.0" height="20" rx="2.5" fill="#f7d64a"/><text x="148" y="304.5" font-size="12.5" font-weight="bold" text-anchor="middle" fill="#333" style="-webkit-text-stroke:0">A507</text><rect x="70" y="313" width="690" height="21" fill="#fff" opacity="0.7"/><text x="80" y="328" font-size="12.5" fill="#333">Données cartographiques ©2018 Google</text><text x="428" y="328" font-size="12.5" fill="#333">2 km</text><path d="M470 320 V329 H528 V320" fill="none" stroke="#444" stroke-width="1.5"/><text x="556" y="328" font-size="12.5" fill="#333">Conditions d’utilisation</text><text x="14" y="324" font-size="30" font-weight="bold" letter-spacing="-1"><tspan fill="#4285f4">G</tspan><tspan fill="#ea4335">o</tspan><tspan fill="#fbbc05">o</tspan><tspan fill="#4285f4">g</tspan><tspan fill="#34a853">l</tspan><tspan fill="#ea4335">e</tspan></text><rect x="680" y="128" width="48" height="52" rx="3" fill="#fff"/><circle cx="704" cy="141" r="6" fill="#f4a63a"/><path d="M697 149 H711 L709 166 H699Z" fill="#f4a63a"/><rect x="680" y="198" width="48" height="95" rx="3" fill="#fff"/><path d="M696 221 H712 M704 213 V229 M697 270 H711" stroke="#555" stroke-width="3.5"/><path d="M688 245 H720" stroke="#ddd" stroke-width="1.5"/></g><g transform="translate(0,0) scale(0.18667)"><rect x="22" y="18" width="188" height="62" rx="3" fill="#fff"/><path d="M100 22 V76" stroke="#e0e0e0" stroke-width="1.5"/><text x="60" y="55" font-size="15" font-weight="bold" text-anchor="middle" fill="#000" stroke="#000" stroke-width="0.5">Plan</text><text x="155" y="55" font-size="15" text-anchor="middle" fill="#444" stroke="#444" stroke-width="0.3">Satellite</text><rect x="676" y="18" width="46" height="44" rx="3" fill="#fff"/><path d="M687 36 V28 H695 M703 28 H711 V36 M711 44 V52 H703 M695 52 H687 V44" fill="none" stroke="#555" stroke-width="3.5"/></g></g></svg>
<div class="t" style="left:563px;top:362.6px;font-size:5.2px"><b>Altitude</b>:</div>
<div class="t r" style="left:600px;top:362.6px;width:101px;font-size:5.3px">Undefined</div>
<div class="t" style="left:563px;top:368.9px;font-size:5.2px"><b>Latitude</b>:</div>
<div class="t r" style="left:600px;top:368.9px;width:101px;font-size:5.3px">43.5434</div>
<div class="t" style="left:563px;top:375.1px;font-size:5.2px"><b>Longitude</b>:</div>
<div class="t r" style="left:600px;top:375.1px;width:101px;font-size:5.3px">5.44897</div>
<div class="t" style="left:563px;top:381.3px;font-size:5.2px"><b>Date</b>:</div>
<div class="t r" style="left:600px;top:381.3px;width:101px;font-size:5.3px">27/07/2010 06:36</div>
<div class="a" style="left:563px;top:389.3px;width:7.3px;height:6.6px;background:#525252;border-radius:0.8px;overflow:hidden"><svg style="position:absolute;left:1px;top:0.3px" width="5.4" height="5.4" viewBox="0 0 6 6"><path d="M2.6 0.8 A1.8 1.8 0 1 0 2.6 4.4 A1.8 1.8 0 1 0 2.6 0.8 M4 4 L5.5 5.5" fill="none" stroke="#f0f0f0" stroke-width="0.8"/></svg></div>
<div class="a" style="left:572.8px;top:389.3px;width:7.3px;height:6.6px;background:#525252;border-radius:0.8px;overflow:hidden"><svg style="position:absolute;left:1px;top:0.3px" width="5.4" height="5.4" viewBox="0 0 6 6"><path d="M0.6 0.6 L5.4 5.4 M5.4 0.6 L0.6 5.4 M0.6 2 V0.6 H2 M4 0.6 H5.4 V2 M5.4 4 V5.4 H4 M2 5.4 H0.6 V4" fill="none" stroke="#f0f0f0" stroke-width="0.8"/></svg></div>
<div class="a" style="left:582.7px;top:389.3px;width:7.3px;height:6.6px;background:#525252;border-radius:0.8px;overflow:hidden"><svg style="position:absolute;left:1px;top:0.3px" width="5.4" height="5.4" viewBox="0 0 6 6"><path d="M0.8 0.8 H5.2 V5.2 H0.8Z" fill="none" stroke="#f0f0f0" stroke-width="0.8"/><circle cx="3" cy="3" r="1" fill="#f0f0f0"/></svg></div>
<div class="a" style="left:592.6px;top:389.3px;width:7.3px;height:6.6px;background:#525252;border-radius:0.8px;overflow:hidden"><svg style="position:absolute;left:1px;top:0.3px" width="5.4" height="5.4" viewBox="0 0 6 6"><path d="M0.8 1 H5.2 V4.4 H0.8Z M1.6 5.4 H4.4" fill="none" stroke="#f0f0f0" stroke-width="0.8"/></svg></div>
<div class="a" style="left:605.5px;top:389.3px;width:11.5px;height:6.6px;background:#525252;border-radius:0.8px;font-size:5.3px;line-height:6px;text-align:center;color:#e0e0e0">T+</div>
<div class="a" style="left:621px;top:389.3px;width:10px;height:6.6px;background:#525252;border-radius:0.8px;font-size:5.3px;line-height:6px;text-align:center;color:#e0e0e0">T-</div>
<div class="a" style="left:637px;top:389.3px;width:7.3px;height:6.6px;background:#525252;border-radius:0.8px;overflow:hidden"><svg style="position:absolute;left:1px;top:0.3px" width="5.4" height="5.4" viewBox="0 0 6 6"><path d="M3 0.6 V5.4 M0.6 3 H5.4" fill="none" stroke="#f0f0f0" stroke-width="0.8"/></svg></div>
<div class="a" style="left:646.8px;top:389.3px;width:7.3px;height:6.6px;background:#525252;border-radius:0.8px;overflow:hidden"><svg style="position:absolute;left:1px;top:0.3px" width="5.4" height="5.4" viewBox="0 0 6 6"><path d="M1 1 H5 V5 H1Z M2 2 L4 4 M4 2 L2 4" fill="none" stroke="#f0f0f0" stroke-width="0.8"/></svg></div>
<div class="a" style="left:656.7px;top:389.3px;width:7.3px;height:6.6px;background:#525252;border-radius:0.8px;overflow:hidden"><svg style="position:absolute;left:1px;top:0.3px" width="5.4" height="5.4" viewBox="0 0 6 6"><path d="M1.2 2.8 H4.8 V5.2 H1.2Z M2 2.8 V1.6 A1 1 0 0 1 4 1.6 V2.8" fill="none" stroke="#f0f0f0" stroke-width="0.8"/></svg></div>
<div class="a" style="left:639.7px;top:397.4px;width:52.6px;height:7.6px;background:linear-gradient(#5e5e5e,#4e4e4e);border-radius:1px;border:0.4px solid #6a6a6a"></div>
<div class="t" style="left:641.5px;top:397.2px;font-size:5.3px">MapQuest</div>
<svg class="a" style="left:687.00px;top:400.60px" width="2.6" height="1.8" viewBox="0 0 2.6 1.8"><polygon points="0,0 2.6,0 1.3,1.8" fill="#ddd"/></svg>
<div class="a" style="left:694.4px;top:397.4px;width:6.8px;height:7.6px;background:#5a5a5a;border-radius:1px;border:0.4px solid #6a6a6a"></div>
<svg class="a" style="left:695.2px;top:398.6px" width="5.2" height="5.2" viewBox="0 0 6 6"><circle cx="3" cy="3" r="2.5" fill="#f0f0f0"/><path d="M1.4 2 L3 2.8 L2.4 4.4 M3.6 1 L4.6 2.4 L4 4" stroke="#444" stroke-width="0.7" fill="none"/></svg>
<svg class="a" style="left:512.5999999999999px;top:408.6px" width="4.8" height="4.8" viewBox="0 0 6 6"><path d="M1 2 H5 L4.4 5.4 H1.6Z M2.2 2 V0.8 H3.8 V2" fill="none" stroke="#8a8a8a" stroke-width="0.9"/></svg>
<svg class="a" style="left:522.8px;top:409px" width="4.6" height="4" viewBox="0 0 4.6 4"><polygon points="0.5,0.5 4.1,0.5 2.3,3.5" fill="none" stroke="#d8d8d8" stroke-width="0.7"/></svg>
<svg class="a" style="left:604.3px;top:408.6px" width="4.8" height="4.8" viewBox="0 0 6 6"><path d="M0.6 0.6 L2.2 2.2 M5.4 0.6 L3.8 2.2 M0.6 5.4 L2.2 3.8 M5.4 5.4 L3.8 3.8 M2 2 H4 V4 H2Z" fill="none" stroke="#d0d0d0" stroke-width="0.9"/></svg>
<svg class="a" style="left:612.5999999999999px;top:408.6px" width="4.8" height="4.8" viewBox="0 0 6 6"><path d="M0.6 2 V0.6 H2 M4 0.6 H5.4 V2 M5.4 4 V5.4 H4 M2 5.4 H0.6 V4" fill="none" stroke="#d0d0d0" stroke-width="0.9"/></svg>
<svg class="a" style="left:620.3px;top:408.6px" width="4.8" height="4.8" viewBox="0 0 6 6"><path d="M0.6 0.6 H5.4 V5.4 H0.6Z M0.6 3 H5.4 M3 0.6 V5.4" fill="none" stroke="#d0d0d0" stroke-width="0.9"/></svg>
<div class="a" style="left:627.5px;top:410.6px;width:5px;height:0.8px;background:#3a7ad6"></div>
<div class="a" style="left:632.5px;top:410.6px;width:34px;height:0.7px;background:#555"></div>
<div class="a" style="left:632px;top:409.2px;width:3.6px;height:3.6px;border-radius:50%;background:#777"></div>
<svg class="a" style="left:668.3px;top:408.6px" width="4.8" height="4.8" viewBox="0 0 6 6"><path d="M0.6 0.6 H5.4 V5.4 H0.6Z M1.4 1.4 L4.6 4.6 M4.6 1.4 L1.4 4.6" fill="none" stroke="#d0d0d0" stroke-width="0.9"/></svg>
<div class="a" style="left:675.2px;top:406.8px;width:20.2px;height:8.4px;background:#1c1c1c"></div>
<div class="t" style="left:677.5px;top:407px;font-size:5.3px;color:#666">10%</div>
<div class="a" style="left:696px;top:407px;width:5.9px;height:8.1px;background:#525252;border-radius:0.8px"></div>
<div class="a" style="left:698px;top:411px;width:2px;height:0.6px;background:#999"></div>
<svg class="a" style="left:705.8px;top:411.4px" width="4.5" height="4.5" viewBox="0 0 4.5 4.5"><polygon points="4.5,0 4.5,4.5 0,4.5" fill="#555"/></svg>
<div class="a" style="left:701.8px;top:28px;width:8.2px;height:378px;background:#2b2b2b"></div>
<div class="a" style="left:701.8px;top:28px;width:8.2px;height:225.5px;background:#1c1c1c"></div>
<div class="a" style="left:701.8px;top:122.2px;width:8.2px;height:18.8px;background:#444"></div>
<svg class="a" style="left:703.4px;top:28.8px" width="5" height="5" viewBox="0 0 5 5"><rect x="0.5" y="0.4" width="4" height="4.2" fill="none" stroke="#f0f0f0" stroke-width="0.7"/><path d="M1.3 1.6 H3.7 M1.3 2.6 H3.7 M1.3 3.6 H3" stroke="#f0f0f0" stroke-width="0.5"/></svg>
<div class="vr" style="left:709.9px;top:35.3px;font-size:5.3px;color:#fff">Properties</div>
<svg class="a" style="left:703.4px;top:64.1px" width="5" height="5" viewBox="0 0 5 5"><path d="M2.5 0.4 L3.2 1.8 L4.6 2.5 L3.2 3.2 L2.5 4.6 L1.8 3.2 L0.4 2.5 L1.8 1.8Z" fill="#f0f0f0" opacity="0.8"/></svg>
<div class="vr" style="left:709.9px;top:70.6px;font-size:5.3px;color:#fff">Metadata</div>
<svg class="a" style="left:703.4px;top:97.4px" width="5" height="5" viewBox="0 0 5 5"><path d="M0.5 4.5 L1.5 2.5 L2.3 3.5 L3.2 0.8 L4.5 4.5Z" fill="#f0f0f0"/></svg>
<div class="vr" style="left:709.9px;top:103.9px;font-size:5.3px;color:#fff">Colors</div>
<svg class="a" style="left:703.3px;top:123.4px" width="5.2" height="5.2" viewBox="0 0 6 6"><circle cx="3" cy="3" r="2.5" fill="#f0f0f0"/><path d="M1.4 2 L3 2.8 L2.4 4.4 M3.6 1 L4.6 2.4 L4 4" stroke="#333" stroke-width="0.7" fill="none"/></svg>
<div class="vr" style="left:709.9px;top:130px;font-size:5.3px;color:#fff">Map</div>
<svg class="a" style="left:703.4px;top:142.3px" width="5" height="5" viewBox="0 0 5 5"><rect x="0.5" y="0.4" width="4" height="4.2" fill="none" stroke="#f0f0f0" stroke-width="0.7"/><path d="M1.3 1.6 H3.7 M1.3 2.6 H3.7 M1.3 3.6 H3" stroke="#f0f0f0" stroke-width="0.5"/></svg>
<div class="vr" style="left:709.9px;top:149.2px;font-size:5.3px;color:#fff">Captions</div>
<svg class="a" style="left:703.4px;top:174.1px" width="5" height="5" viewBox="0 0 5 5"><path d="M0.6 4.6 V3 M1.9 4.6 V2 M3.2 4.6 V1 M4.4 4.6 V0.4" stroke="#f0f0f0" stroke-width="0.9"/></svg>
<div class="vr" style="left:709.9px;top:181px;font-size:5.3px;color:#fff">Versions</div>
<svg class="a" style="left:703.4px;top:204.7px" width="5" height="5" viewBox="0 0 5 5"><path d="M0.8 0.8 L4.4 2.5 L0.8 4.2Z" fill="none" stroke="#f0f0f0" stroke-width="0.7"/></svg>
<div class="vr" style="left:709.9px;top:211.2px;font-size:5.3px;color:#fff">Filters</div>
<svg class="a" style="left:703.4px;top:230.1px" width="5" height="5" viewBox="0 0 5 5"><path d="M0.8 4.2 L3 2 M3 0.6 A1.4 1.4 0 1 0 4.4 2 L3.4 2.2 L2.8 1.6Z" fill="#f0f0f0" stroke="#f0f0f0" stroke-width="0.7"/></svg>
<div class="vr" style="left:709.9px;top:236.6px;font-size:5.3px;color:#fff">Tools</div>
<div class="a" style="left:195.2px;top:13.9px;width:188.5px;height:126.4px;background:#232323;box-shadow:0 0.3px 2px rgba(0,0,0,0.45)"></div>
<div class="t" style="left:204.3px;top:15.0px">Export to <u>M</u>ediaWiki...</div>
<div class="t" style="left:204.3px;top:23.93px">Export to F<u>l</u>ash...</div>
<div class="t" style="left:332.6px;top:23.93px">Alt+Shift+L</div>
<div class="t" style="left:204.3px;top:32.86px">Export to <u>F</u>acebook...</div>
<div class="t" style="left:332.6px;top:32.86px">Alt+Shift+F</div>
<div class="t" style="left:204.3px;top:41.78999999999999px">Export to <u>R</u>ajce.net...</div>
<div class="t" style="left:332.6px;top:41.78999999999999px">Alt+Shift+J</div>
<div class="t" style="left:204.3px;top:50.72px">Export to <u>Y</u>andex.Fotki...</div>
<div class="t" style="left:332.6px;top:50.72px">Alt+Shift+Y</div>
<div class="t" style="left:204.3px;top:59.64999999999999px">Export to <u>S</u>mugMug...</div>
<div class="t" style="left:332.6px;top:59.64999999999999px">Alt+Shift+S</div>
<div class="t" style="left:204.3px;top:68.58px">Export to <u>I</u>mgur...</div>
<div class="t" style="left:204.3px;top:77.50999999999999px">Export to <u>P</u>iwigo...</div>
<div class="t" style="left:204.3px;top:86.44px">Export to <u>D</u>ropbox...</div>
<div class="t" style="left:332.6px;top:86.44px">Ctrl+Alt+Shift+D</div>
<div class="t" style="left:204.3px;top:95.37px">Export to Flick<u>r</u>...</div>
<div class="t" style="left:332.6px;top:95.37px">Alt+Shift+R</div>
<div class="t" style="left:204.3px;top:104.3px">Export to <u>I</u>mageshack...</div>
<div class="t" style="left:332.6px;top:104.3px">Alt+Shift+M</div>
<div class="t" style="left:204.3px;top:113.22999999999999px">Export to <u>j</u>Album</div>
<div class="t" style="left:204.3px;top:122.16px">Export to <u>G</u>oogle Drive...</div>
<div class="t" style="left:332.6px;top:122.16px">Ctrl+Alt+Shift+G</div>
<div class="t" style="left:204.3px;top:131.09px">Export to G<u>o</u>ogle Photos/PicasaWeb...</div>
<div class="t" style="left:332.6px;top:131.09px">Alt+Shift+P</div>
<div class="a" style="left:197.3px;top:52.8px;width:4.9px;height:4.9px;border-radius:50%;background:radial-gradient(circle at 40% 40%,#8fd4ff,#2a8ae0)"></div>
</div></body></html>
